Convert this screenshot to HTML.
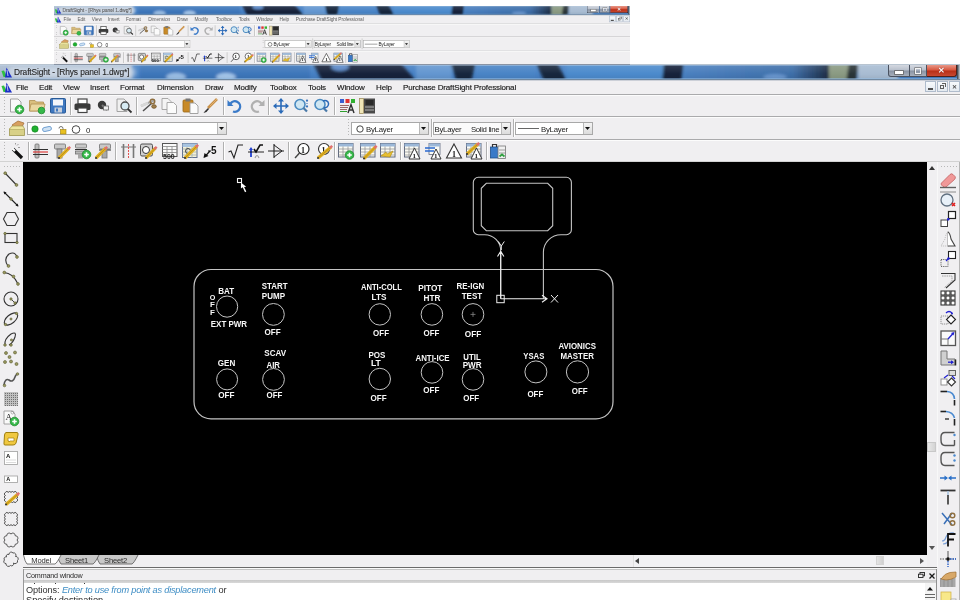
<!DOCTYPE html>
<html><head><meta charset="utf-8"><style>
html,body{margin:0;padding:0;width:960px;height:600px;overflow:hidden;background:#fff;font-family:"Liberation Sans", sans-serif}
</style></head><body>
<div style="position:relative;width:960px;height:600px;overflow:hidden;will-change:transform">
<div style="position:absolute;left:54px;top:6px;width:960px;height:97px;transform:scale(0.6);transform-origin:0 0;overflow:hidden;filter:blur(1.3px)"><svg style="position:absolute;left:0;top:0" width="960" height="15"><defs><filter id="tbs" x="-20%" y="-50%" width="140%" height="200%"><feGaussianBlur stdDeviation="1.6"/></filter><linearGradient id="tbsg" x1="0" x2="1"><stop offset="0" stop-color="#4a80c0"/><stop offset="0.75" stop-color="#3e6ea8"/><stop offset="1" stop-color="#1c2c44"/></linearGradient></defs><rect x="0" y="0" width="960" height="15" fill="#4680c4"/><g filter="url(#tbs)"><rect x="-10" y="-4" width="142" height="22" fill="#aabbd0"/><rect x="140" y="-4" width="170" height="22" fill="#3e76ba"/><ellipse cx="176" cy="12" rx="10" ry="4" fill="#9cc0e6"/><ellipse cx="226" cy="12" rx="10" ry="4" fill="#a6c8ec"/><path d="M312 -4H399L418 18H323Z" fill="#17233a"/><ellipse cx="340" cy="2" rx="9" ry="4" fill="#5a88c8"/><rect x="416" y="-4" width="36" height="22" fill="#6496d0"/><path d="M450 -4H476L471 18H457Z" fill="#18263c"/><rect x="476" y="-4" width="60" height="22" fill="#4a84c6"/><path d="M535 -4H556L568 18H545Z" fill="#18263c"/><rect x="566" y="-4" width="98" height="22" fill="#4c8acc"/><path d="M664 -4H684L681 18H662Z" fill="#16243a"/><rect x="684" y="-4" width="145" height="22" fill="url(#tbsg)"/><ellipse cx="775" cy="12" rx="12" ry="3" fill="#6a98d0"/><rect x="829" y="-4" width="21" height="22" fill="#8a9a82"/><path d="M849 -4H859L856 18H846Z" fill="#2a3438"/><rect x="858" y="-4" width="40" height="22" fill="#a8bcd2"/></g></svg>
<div style="position:absolute;left:0px;top:0px;width:960px;height:15px;background:linear-gradient(rgba(255,255,255,0.12),rgba(0,0,0,0) 60%,rgba(0,0,0,0.08))"></div>
<div style="position:absolute;left:0px;top:0px;width:960px;height:1px;background:rgba(190,210,230,0.45)"></div>
<div style="position:absolute;left:0px;top:13px;width:960px;height:1px;background:rgba(150,190,230,0.55)"></div>
<div style="position:absolute;left:0px;top:14px;width:960px;height:1px;background:#7088a0"></div>
<div style="position:absolute;left:8px;top:2px;width:128px;height:11px;background:rgba(225,232,240,0.6);border-radius:6px;filter:blur(2px)"></div>
<svg style="position:absolute;left:1px;top:2px;overflow:visible" width="12" height="11" viewBox="0 0 12 11" ><path d="M0.5 4L3 3.5L6 10H2.5Z" fill="#30c040"/><path d="M5.5 0.5L11 10.5H4Z" fill="#1a2ec8"/><path d="M6 3L7 9" stroke="#fff" stroke-width="0.7"/></svg>
<div style="position:absolute;left:14px;top:3px;font-size:8.4px;line-height:1;color:#707070;white-space:nowrap;letter-spacing:-0.12px;-webkit-text-stroke:0.12px #333">DraftSight - [Rhys panel 1.dwg*]</div>
<div style="position:absolute;left:957px;top:0px;width:3px;height:14px;background:linear-gradient(90deg,#303840,#c8d0d8)"></div>
<div style="position:absolute;left:888px;top:0px;width:22px;height:12px;background:linear-gradient(#d4d8e0,#b8c0cc 45%,#8a94a4 55%,#a8b0bc);border:1px solid #4a5260;border-top:none;border-radius:0 0 0 3px;box-sizing:border-box"></div>
<div style="position:absolute;left:895px;top:6px;width:8px;height:2.5px;background:#fff;box-shadow:0 0 0 0.8px #666"></div>
<div style="position:absolute;left:910px;top:0px;width:17px;height:12px;background:linear-gradient(#d4d8e0,#b8c0cc 45%,#8a94a4 55%,#a8b0bc);border:1px solid #4a5260;border-left:none;border-top:none;box-sizing:border-box"></div>
<div style="position:absolute;left:915px;top:3px;width:6px;height:5.5px;border:1.5px solid #f4f4f4;box-sizing:border-box;box-shadow:0 0 0 0.6px #666"></div>
<div style="position:absolute;left:927px;top:0px;width:30px;height:12px;background:linear-gradient(#e89888,#d85840 45%,#b83018 55%,#c84830);border:1px solid #502018;border-left:none;border-top:none;border-radius:0 0 3px 0;box-sizing:border-box"></div>
<div style="position:absolute;left:938px;top:2px;font-size:8px;line-height:1;color:#fff;white-space:nowrap;font-weight:bold;text-shadow:0 0 1px #600">&#x2715;</div>
<div style="position:absolute;left:0px;top:15px;width:960px;height:15px;background:#f0eff1"></div>
<div style="position:absolute;left:0px;top:15px;width:960px;height:1px;background:#ccd0d8"></div>
<svg style="position:absolute;left:1px;top:17px;overflow:visible" width="12" height="11" viewBox="0 0 12 11" ><path d="M0.5 4L3 3.5L6 10H2.5Z" fill="#30c040"/><path d="M5.5 0.5L11 10.5H4Z" fill="#1a2ec8"/><path d="M6 3L7 9" stroke="#fff" stroke-width="0.7"/></svg>
<div style="position:absolute;left:16px;top:18.8px;font-size:8px;line-height:1;color:#606060;white-space:nowrap;letter-spacing:-0.15px;-webkit-text-stroke:0px #000">File</div>
<div style="position:absolute;left:39px;top:18.8px;font-size:8px;line-height:1;color:#606060;white-space:nowrap;letter-spacing:-0.15px;-webkit-text-stroke:0px #000">Edit</div>
<div style="position:absolute;left:63px;top:18.8px;font-size:8px;line-height:1;color:#606060;white-space:nowrap;letter-spacing:-0.15px;-webkit-text-stroke:0px #000">View</div>
<div style="position:absolute;left:90px;top:18.8px;font-size:8px;line-height:1;color:#606060;white-space:nowrap;letter-spacing:-0.15px;-webkit-text-stroke:0px #000">Insert</div>
<div style="position:absolute;left:120px;top:18.8px;font-size:8px;line-height:1;color:#606060;white-space:nowrap;letter-spacing:-0.15px;-webkit-text-stroke:0px #000">Format</div>
<div style="position:absolute;left:157px;top:18.8px;font-size:8px;line-height:1;color:#606060;white-space:nowrap;letter-spacing:-0.15px;-webkit-text-stroke:0px #000">Dimension</div>
<div style="position:absolute;left:205px;top:18.8px;font-size:8px;line-height:1;color:#606060;white-space:nowrap;letter-spacing:-0.15px;-webkit-text-stroke:0px #000">Draw</div>
<div style="position:absolute;left:234px;top:18.8px;font-size:8px;line-height:1;color:#606060;white-space:nowrap;letter-spacing:-0.15px;-webkit-text-stroke:0px #000">Modify</div>
<div style="position:absolute;left:270px;top:18.8px;font-size:8px;line-height:1;color:#606060;white-space:nowrap;letter-spacing:-0.15px;-webkit-text-stroke:0px #000">Toolbox</div>
<div style="position:absolute;left:308px;top:18.8px;font-size:8px;line-height:1;color:#606060;white-space:nowrap;letter-spacing:-0.15px;-webkit-text-stroke:0px #000">Tools</div>
<div style="position:absolute;left:337px;top:18.8px;font-size:8px;line-height:1;color:#606060;white-space:nowrap;letter-spacing:-0.15px;-webkit-text-stroke:0px #000">Window</div>
<div style="position:absolute;left:376px;top:18.8px;font-size:8px;line-height:1;color:#606060;white-space:nowrap;letter-spacing:-0.15px;-webkit-text-stroke:0px #000">Help</div>
<div style="position:absolute;left:403px;top:18.8px;font-size:8px;line-height:1;color:#606060;white-space:nowrap;letter-spacing:-0.15px;-webkit-text-stroke:0px #000">Purchase DraftSight Professional</div>
<div style="position:absolute;left:925px;top:16px;width:11px;height:11px;background:linear-gradient(#f8fafc,#e4eaf0);border:1px solid #b0bccc;box-sizing:border-box"></div>
<div style="position:absolute;left:937px;top:16px;width:11px;height:11px;background:linear-gradient(#f8fafc,#e4eaf0);border:1px solid #b0bccc;box-sizing:border-box"></div>
<div style="position:absolute;left:949px;top:16px;width:11px;height:11px;background:linear-gradient(#f8fafc,#e4eaf0);border:1px solid #b0bccc;box-sizing:border-box"></div>
<div style="position:absolute;left:928px;top:23px;width:5px;height:1.5px;background:#505050"></div>
<div style="position:absolute;left:940px;top:19.5px;width:4px;height:4px;border:1px solid #606060;box-sizing:border-box"></div>
<div style="position:absolute;left:941.5px;top:18px;width:4px;height:4px;border-top:1px solid #606060;border-right:1px solid #606060;box-sizing:border-box"></div>
<div style="position:absolute;left:951.5px;top:18.5px;font-size:6px;line-height:1;color:#505050;white-space:nowrap;font-weight:bold">&#x2715;</div>
<div style="position:absolute;left:959px;top:31px;width:1px;height:20px;background:#a0a0a0"></div>
<div style="position:absolute;left:0px;top:30px;width:960px;height:67px;background:#f0eff1"></div>
<div style="position:absolute;left:0px;top:29px;width:960px;height:1px;background:#d4d4d6"></div>
<div style="position:absolute;left:0px;top:30px;width:960px;height:1px;background:#fcfcfc"></div>
<div style="position:absolute;left:0px;top:51px;width:960px;height:1px;background:#b0b0b2"></div>
<div style="position:absolute;left:0px;top:52px;width:960px;height:1px;background:#fcfcfc"></div>
<div style="position:absolute;left:0px;top:74px;width:960px;height:1px;background:#d8d8da"></div>
<div style="position:absolute;left:0px;top:75px;width:960px;height:1px;background:#fcfcfc"></div>
<div style="position:absolute;left:4px;top:32px;width:1px;height:18px;background:repeating-linear-gradient(#b8b8b8 0 1px,transparent 1px 3px)"></div>
<svg style="position:absolute;left:9px;top:33px;overflow:visible" width="16" height="16" viewBox="0 0 16 16" ><path d="M1.5 1H9.0L12.0 4V14H1.5Z" fill="#fafafa" stroke="#9a9a9a" stroke-width="0.9"/><circle cx="10.5" cy="11.5" r="4.3" fill="#36b84a" stroke="#1f8a2c" stroke-width="0.8"/><path d="M8.2 11.5H12.8M10.5 9.2V13.8" stroke="#fff" stroke-width="1.6"/></svg>
<svg style="position:absolute;left:29px;top:33px;overflow:visible" width="16" height="16" viewBox="0 0 16 16" ><path d="M0.5 2.5H6L7.5 4H14.5V13H0.5Z" fill="#d9bf7e" stroke="#b09050" stroke-width="0.8"/><path d="M2 6H16L14.5 13H0.5Z" fill="#ead7a0" stroke="#b09050" stroke-width="0.8"/><circle cx="12.5" cy="12.5" r="3.3" fill="#36b84a" stroke="#1f8a2c" stroke-width="0.8"/><path d="M10.2 12.5H14.8M12.5 10.2V14.8" stroke="#36b84a" stroke-width="1.6"/></svg>
<svg style="position:absolute;left:50px;top:33px;overflow:visible" width="16" height="16" viewBox="0 0 16 16" ><rect x="0.5" y="0.5" width="15" height="14.5" rx="1" fill="#3f78c0" stroke="#285a98"/><rect x="3" y="1.5" width="10" height="6" fill="#f4f6fa"/><rect x="4.5" y="9.5" width="7.5" height="5" fill="#c8d0dc"/><rect x="6" y="10.5" width="2" height="3" fill="#3f78c0"/></svg>
<svg style="position:absolute;left:74px;top:33px;overflow:visible" width="16" height="16" viewBox="0 0 16 16" ><rect x="4" y="1" width="9" height="5" fill="#fff" stroke="#444" stroke-width="1.2"/><rect x="0.5" y="5.5" width="16" height="6.5" rx="1.5" fill="#3a3a3a"/><rect x="4" y="10" width="9" height="4.5" fill="#fff" stroke="#444" stroke-width="1.2"/></svg>
<svg style="position:absolute;left:97px;top:33px;overflow:visible" width="16" height="16" viewBox="0 0 16 16" ><circle cx="5" cy="7" r="4.2" fill="#3a3a3a"/><path d="M5 7L10 12" stroke="#777" stroke-width="2"/><rect x="6.5" y="8" width="5" height="4" fill="#eee" stroke="#666" stroke-width="0.8"/></svg>
<svg style="position:absolute;left:116px;top:33px;overflow:visible" width="16" height="16" viewBox="0 0 16 16" ><path d="M1 1H8L11 4V13.5H1Z" fill="#f0f0f0" stroke="#9a9a9a" stroke-width="0.9"/><circle cx="9" cy="8" r="4" fill="#d8ecf4" stroke="#505050" stroke-width="1.3"/><path d="M11.8 10.8L15.5 14.5" stroke="#303030" stroke-width="1.8"/></svg>
<svg style="position:absolute;left:140px;top:33px;overflow:visible" width="16" height="16" viewBox="0 0 16 16" ><path d="M1 8L15 2" stroke="#a8a8a8" stroke-width="2"/><path d="M1 8L8 5" stroke="#d8d8d8" stroke-width="2.5"/><path d="M3 13L12 5" stroke="#505050" stroke-width="1.5"/><circle cx="12.5" cy="3.5" r="2.2" fill="none" stroke="#907040" stroke-width="1.5"/><ellipse cx="14" cy="8.5" rx="2.3" ry="1.8" fill="#a08050" stroke="#705020" stroke-width="0.8"/></svg>
<svg style="position:absolute;left:161px;top:33px;overflow:visible" width="16" height="16" viewBox="0 0 16 16" ><path d="M1 0.5H7L10 3.5V11.5H1Z" fill="#f4f4f4" stroke="#a0a0a0" stroke-width="0.9"/><path d="M6 4.5H12.5L15.5 7.5V15.5H6Z" fill="#fbfbfb" stroke="#a0a0a0" stroke-width="0.9"/></svg>
<svg style="position:absolute;left:182px;top:33px;overflow:visible" width="16" height="16" viewBox="0 0 16 16" ><rect x="1" y="2" width="10" height="12" rx="1" fill="#c88a28" stroke="#9a6818" stroke-width="0.8"/><rect x="3.5" y="0.5" width="5" height="3" fill="#777"/><path d="M8 5H13L16 8V15.5H8Z" fill="#fbfbfb" stroke="#9a9a9a" stroke-width="0.9"/></svg>
<svg style="position:absolute;left:202px;top:33px;overflow:visible" width="16" height="16" viewBox="0 0 16 16" ><path d="M15 1L6 10" stroke="#c89048" stroke-width="2.6"/><path d="M15 1L8 8" stroke="#e0b070" stroke-width="1"/><path d="M6 10L3 13L1.5 15L4.5 14L7 11Z" fill="#303030"/></svg>
<svg style="position:absolute;left:227px;top:33px;overflow:visible" width="16" height="16" viewBox="0 0 16 16" ><path d="M3.5 5.5A5.3 5.3 0 1 1 6 13.5" fill="none" stroke="#3a7ac8" stroke-width="2.3"/><path d="M0.5 2V8H6.5Z" fill="#3a7ac8"/></svg>
<svg style="position:absolute;left:249px;top:33px;overflow:visible" width="16" height="16" viewBox="0 0 16 16" ><path d="M12.5 5.5A5.3 5.3 0 1 0 10 13.5" fill="none" stroke="#b0b0b0" stroke-width="2.3"/><path d="M15.5 2V8H9.5Z" fill="#b0b0b0"/></svg>
<svg style="position:absolute;left:273px;top:33px;overflow:visible" width="16" height="16" viewBox="0 0 16 16" ><path d="M8 1V15M1 8H15" stroke="#2a6ab8" stroke-width="1.6"/><path d="M8 0L5 3.5H11Z M8 16L5 12.5H11Z M0 8L3.5 5V11Z M16 8L12.5 5V11Z" fill="#2a6ab8"/></svg>
<svg style="position:absolute;left:293px;top:33px;overflow:visible" width="16" height="16" viewBox="0 0 16 16" ><circle cx="7" cy="6.5" r="5" fill="#cfe6f2" stroke="#4a8ac0" stroke-width="1.6"/><path d="M10.5 10L14 13.5" stroke="#4a7aa8" stroke-width="2.2"/><path d="M14 1L12.7 3H15.3Z M14 10L12.7 8H15.3Z" fill="#2a6ab8"/><path d="M14 3V8" stroke="#2a6ab8" stroke-width="1" stroke-dasharray="1 1"/></svg>
<svg style="position:absolute;left:313px;top:33px;overflow:visible" width="16" height="16" viewBox="0 0 16 16" ><circle cx="7" cy="6.5" r="5" fill="#cfe6f2" stroke="#4a8ac0" stroke-width="1.6"/><path d="M10.5 10L14 13.5" stroke="#4a7aa8" stroke-width="2.2"/><path d="M10 3A3.6 3.6 0 1 1 11 9.5" fill="none" stroke="#2a6ab8" stroke-width="1.5"/></svg>
<svg style="position:absolute;left:339px;top:33px;overflow:visible" width="16" height="16" viewBox="0 0 16 16" ><rect x="1" y="1" width="4" height="4" fill="#3a60d0"/><rect x="6.5" y="1" width="4" height="4" fill="#e03030"/><rect x="12" y="1" width="4" height="4" fill="#30b030"/><path d="M1 7.5H10M1 9.5H9M1 11.5H8" stroke="#9a6a6a" stroke-width="1"/><path d="M1 13.5H8" stroke="#30a030" stroke-width="1"/><path d="M9 15L12 6.5L15 15M10 12H14" fill="none" stroke="#303030" stroke-width="1.4"/></svg>
<svg style="position:absolute;left:359px;top:33px;overflow:visible" width="16" height="16" viewBox="0 0 16 16" ><rect x="0.5" y="0.5" width="4" height="15" fill="#f0e6b8" stroke="#a09060" stroke-width="0.8"/><rect x="5" y="0.5" width="11" height="15" fill="#4a4a4a"/><rect x="6.5" y="2" width="8" height="5" fill="#2a2a2a"/><path d="M6 9H15M6 12H15" stroke="#ccc" stroke-width="0.8"/></svg>
<div style="position:absolute;left:70px;top:32px;width:1px;height:18px;background:#b0b0b0;box-shadow:1px 0 0 #fff"></div>
<div style="position:absolute;left:136px;top:32px;width:1px;height:18px;background:#b0b0b0;box-shadow:1px 0 0 #fff"></div>
<div style="position:absolute;left:223px;top:32px;width:1px;height:18px;background:#b0b0b0;box-shadow:1px 0 0 #fff"></div>
<div style="position:absolute;left:268px;top:32px;width:1px;height:18px;background:#b0b0b0;box-shadow:1px 0 0 #fff"></div>
<div style="position:absolute;left:334px;top:32px;width:1px;height:18px;background:#b0b0b0;box-shadow:1px 0 0 #fff"></div>
<div style="position:absolute;left:4px;top:54px;width:1px;height:18px;background:repeating-linear-gradient(#b8b8b8 0 1px,transparent 1px 3px)"></div>
<svg style="position:absolute;left:9px;top:55px;overflow:visible" width="16" height="16" viewBox="0 0 16 16" ><path d="M3 5L9 1L15 3L13 7L6 9Z" fill="#d8a060" stroke="#a06a30" stroke-width="0.7"/><rect x="0.5" y="9" width="15" height="6.5" fill="#d8d088" stroke="#a09850" stroke-width="0.8"/><path d="M0.5 9L3 6H14L15.5 9" fill="#eee6a0" stroke="#a09850" stroke-width="0.7"/></svg>
<div style="position:absolute;left:27px;top:57px;width:200px;height:13px;background:#fff;border:1px solid #a8a8a8;box-sizing:border-box"></div>
<div style="position:absolute;left:217px;top:58px;width:9px;height:11px;background:linear-gradient(#f4f4f4,#dcdcdc);border-left:1px solid #b8b8b8;box-sizing:border-box"></div>
<svg style="position:absolute;left:219px;top:62.0px;overflow:visible" width="6" height="4" viewBox="0 0 6 4" ><path d="M0 0H5L2.5 3Z" fill="#111"/></svg>
<svg style="position:absolute;left:30px;top:60px;overflow:visible" width="60" height="10" viewBox="0 0 60 10" ><circle cx="5" cy="4" r="3.2" fill="#20b030" stroke="#108020" stroke-width="0.6"/><rect x="12.5" y="2" width="9" height="4" rx="2" fill="#cfe2f4" stroke="#5a90c8" stroke-width="0.8" transform="rotate(-12 17 4)"/><path d="M29 3.5A2 2 0 0 1 33 3.5V5" fill="none" stroke="#666" stroke-width="0.9"/><rect x="30.5" y="4.5" width="5.5" height="4.5" fill="#e8c020" stroke="#a08010" stroke-width="0.6"/><circle cx="46" cy="4.5" r="3.8" fill="#fff" stroke="#333" stroke-width="0.9"/></svg><div style="position:absolute;left:86px;top:61.5px;font-size:7.8px;line-height:1;color:#222;white-space:nowrap;">0</div>
<div style="position:absolute;left:348px;top:54px;width:1px;height:18px;background:repeating-linear-gradient(#b8b8b8 0 1px,transparent 1px 3px)"></div>
<div style="position:absolute;left:351px;top:57px;width:78px;height:13px;background:#fff;border:1px solid #a8a8a8;box-sizing:border-box"></div>
<div style="position:absolute;left:419px;top:58px;width:9px;height:11px;background:linear-gradient(#f4f4f4,#dcdcdc);border-left:1px solid #b8b8b8;box-sizing:border-box"></div>
<svg style="position:absolute;left:421px;top:62.0px;overflow:visible" width="6" height="4" viewBox="0 0 6 4" ><path d="M0 0H5L2.5 3Z" fill="#111"/></svg>
<svg style="position:absolute;left:355.5px;top:59.5px;overflow:visible" width="9" height="9" viewBox="0 0 9 9" ><circle cx="4" cy="4" r="3.2" fill="none" stroke="#333" stroke-width="0.9"/></svg><div style="position:absolute;left:366px;top:61px;font-size:7.8px;line-height:1;color:#222;white-space:nowrap;letter-spacing:-0.25px">ByLayer</div>
<div style="position:absolute;left:431px;top:54px;width:1px;height:18px;background:#b0b0b0;box-shadow:1px 0 0 #fff"></div>
<div style="position:absolute;left:433px;top:57px;width:78px;height:13px;background:#fbfbfb;border:1px solid #a8a8a8;box-sizing:border-box"></div>
<div style="position:absolute;left:501px;top:58px;width:9px;height:11px;background:linear-gradient(#f4f4f4,#dcdcdc);border-left:1px solid #b8b8b8;box-sizing:border-box"></div>
<svg style="position:absolute;left:503px;top:62.0px;overflow:visible" width="6" height="4" viewBox="0 0 6 4" ><path d="M0 0H5L2.5 3Z" fill="#111"/></svg>
<div style="position:absolute;left:434.5px;top:61px;font-size:7.8px;line-height:1;color:#222;white-space:nowrap;letter-spacing:-0.25px">ByLayer</div><div style="position:absolute;left:471px;top:61px;font-size:7.8px;line-height:1;color:#222;white-space:nowrap;letter-spacing:-0.35px">Solid line</div>
<div style="position:absolute;left:513px;top:54px;width:1px;height:18px;background:#b0b0b0;box-shadow:1px 0 0 #fff"></div>
<div style="position:absolute;left:515px;top:57px;width:78px;height:13px;background:#fff;border:1px solid #a8a8a8;box-sizing:border-box"></div>
<div style="position:absolute;left:583px;top:58px;width:9px;height:11px;background:linear-gradient(#f4f4f4,#dcdcdc);border-left:1px solid #b8b8b8;box-sizing:border-box"></div>
<svg style="position:absolute;left:585px;top:62.0px;overflow:visible" width="6" height="4" viewBox="0 0 6 4" ><path d="M0 0H5L2.5 3Z" fill="#111"/></svg>
<div style="position:absolute;left:518px;top:63px;width:21px;height:1px;background:#666"></div><div style="position:absolute;left:541px;top:61px;font-size:7.8px;line-height:1;color:#222;white-space:nowrap;letter-spacing:-0.25px">ByLayer</div>
<div style="position:absolute;left:4px;top:77px;width:1px;height:18px;background:repeating-linear-gradient(#b8b8b8 0 1px,transparent 1px 3px)"></div>
<svg style="position:absolute;left:9px;top:78px;overflow:visible" width="16" height="16" viewBox="0 0 16 16" ><path d="M4 6L13 15" stroke="#111" stroke-width="3.2"/><path d="M3.5 5.5L6 8" stroke="#fff" stroke-width="2.2"/><path d="M8 2.5L9.5 1M9 4.5H11M6.5 1.5V0" stroke="#888" stroke-width="0.8"/></svg>
<svg style="position:absolute;left:33px;top:78px;overflow:visible" width="16" height="16" viewBox="0 0 16 16" ><rect x="2" y="1" width="4" height="14" rx="1" fill="#bdbdbd" stroke="#707070" stroke-width="0.8"/><path d="M0 6.5H15M0 11.5H15" stroke="#303030" stroke-width="1.1"/><path d="M0 9H15" stroke="#e04040" stroke-width="1.2"/></svg>
<svg style="position:absolute;left:54px;top:78px;overflow:visible" width="16" height="16" viewBox="0 0 16 16" ><rect x="0.5" y="1" width="11" height="5" rx="1" fill="#c8c8c8" stroke="#707070" stroke-width="0.8"/><rect x="3" y="6" width="5" height="9" fill="#a8a8a8" stroke="#707070" stroke-width="0.8"/><path d="M5 15L15 5" stroke="#e0b020" stroke-width="3.2"/><path d="M5 15L15 5" stroke="#806010" stroke-width="0.6" opacity="0.6"/><circle cx="5" cy="15" r="1" fill="#303030"/><path d="M13.8 6.2L16.2 3.8" stroke="#e07070" stroke-width="2.4"/></svg>
<svg style="position:absolute;left:75px;top:78px;overflow:visible" width="16" height="16" viewBox="0 0 16 16" ><rect x="0.5" y="1" width="11" height="4" rx="1" fill="#c8c8c8" stroke="#707070" stroke-width="0.8"/><path d="M0 6.5H12" stroke="#303030"/><rect x="0.5" y="8" width="11" height="3" fill="#b8b8b8" stroke="#707070" stroke-width="0.8"/><rect x="3" y="11" width="5" height="4.5" fill="#a8a8a8"/><circle cx="11.5" cy="11.5" r="4.3" fill="#36b84a" stroke="#1f8a2c" stroke-width="0.8"/><path d="M9.2 11.5H13.8M11.5 9.2V13.8" stroke="#fff" stroke-width="1.6"/></svg>
<svg style="position:absolute;left:95px;top:78px;overflow:visible" width="16" height="16" viewBox="0 0 16 16" ><rect x="4.5" y="1" width="11" height="5" rx="1" fill="#c8c8c8" stroke="#707070" stroke-width="0.8"/><path d="M4 7H16" stroke="#303030"/><rect x="7" y="8" width="5" height="7" fill="#a8a8a8" stroke="#707070" stroke-width="0.8"/><path d="M1 15L11 5" stroke="#e0b020" stroke-width="3.2"/><path d="M1 15L11 5" stroke="#806010" stroke-width="0.6" opacity="0.6"/><circle cx="1" cy="15" r="1" fill="#303030"/><path d="M9.8 6.2L12.2 3.8" stroke="#e07070" stroke-width="2.4"/></svg>
<svg style="position:absolute;left:121px;top:78px;overflow:visible" width="16" height="16" viewBox="0 0 16 16" ><path d="M2.5 1V15M12.5 1V15" stroke="#777" stroke-width="1.6"/><path d="M0 4H15" stroke="#777" stroke-width="1"/><path d="M7.5 1V15" stroke="#e05050" stroke-width="1" stroke-dasharray="2 1"/></svg>
<svg style="position:absolute;left:140px;top:78px;overflow:visible" width="16" height="16" viewBox="0 0 16 16" ><rect x="0.5" y="1" width="12" height="12" rx="1.5" fill="#d0d0d0" stroke="#505050" stroke-width="1"/><circle cx="6" cy="7" r="3.5" fill="#fff" stroke="#333" stroke-width="1"/><path d="M6 15L15.5 5" stroke="#e0b020" stroke-width="3.2"/><path d="M6 15L15.5 5" stroke="#806010" stroke-width="0.6" opacity="0.6"/><circle cx="6" cy="15" r="1" fill="#303030"/><path d="M14.3 6.2L16.7 3.8" stroke="#e07070" stroke-width="2.4"/></svg>
<svg style="position:absolute;left:162px;top:78px;overflow:visible" width="16" height="16" viewBox="0 0 16 16" ><rect x="0.5" y="0.5" width="14.5" height="13" fill="#fafafa" stroke="#555" stroke-width="1"/><path d="M0.5 3.5H15M0.5 6.5H15M0.5 9.5H15M5 3.5V14M10 3.5V14" stroke="#888" stroke-width="0.8"/><text x="1" y="15.5" font-size="7" font-family="Liberation Sans" font-weight="bold" fill="#222">500</text></svg>
<svg style="position:absolute;left:182px;top:78px;overflow:visible" width="16" height="16" viewBox="0 0 16 16" ><rect x="0.5" y="0.5" width="14.5" height="14" fill="#f4f0d8" stroke="#607090" stroke-width="1"/><rect x="0.5" y="0.5" width="14.5" height="3.5" fill="#a8c4e0"/><path d="M0.5 6H15M0.5 9H15M0.5 12H15M5 4V15M10 4V15" stroke="#9aa" stroke-width="0.7"/><circle cx="6" cy="8" r="2.5" fill="none" stroke="#444"/><path d="M3 15L15 3" stroke="#e0b020" stroke-width="3.2"/><path d="M3 15L15 3" stroke="#806010" stroke-width="0.6" opacity="0.6"/><circle cx="3" cy="15" r="1" fill="#303030"/><path d="M13.8 4.2L16.2 1.8" stroke="#e07070" stroke-width="2.4"/></svg>
<svg style="position:absolute;left:203px;top:78px;overflow:visible" width="16" height="16" viewBox="0 0 16 16" ><path d="M1.5 14L7 8" stroke="#111" stroke-width="1.2"/><path d="M0.5 15L1.5 10L5.5 13Z" fill="#111"/><text x="8" y="11" font-size="10" font-family="Liberation Sans" font-weight="bold" fill="#111">5</text><path d="M5 8H8" stroke="#111"/></svg>
<svg style="position:absolute;left:228px;top:78px;overflow:visible" width="16" height="16" viewBox="0 0 16 16" ><path d="M0.5 9L3 8L6 15L10 2H15" fill="none" stroke="#222" stroke-width="1.1"/></svg>
<svg style="position:absolute;left:248px;top:78px;overflow:visible" width="16" height="16" viewBox="0 0 16 16" ><path d="M3 14V6" stroke="#2040d0" stroke-width="1.8"/><path d="M3 4L1 7H5Z" fill="#2040d0"/><path d="M6 6L8 9L12 2H15" fill="none" stroke="#111" stroke-width="1.6"/><path d="M0 9H16" stroke="#111" stroke-width="0.9"/><path d="M7 15Q9 10 11 15" fill="none" stroke="#999" stroke-width="1.1"/></svg>
<svg style="position:absolute;left:268px;top:78px;overflow:visible" width="16" height="16" viewBox="0 0 16 16" ><path d="M0 8H16M6 1V15" stroke="#222" stroke-width="1.1"/><path d="M6 2L14 8L6 14" fill="none" stroke="#222" stroke-width="1"/></svg>
<svg style="position:absolute;left:294px;top:78px;overflow:visible" width="16" height="16" viewBox="0 0 16 16" ><circle cx="9.5" cy="6" r="5.5" fill="#fff" stroke="#222" stroke-width="1.2"/><text x="7" y="9.5" font-size="8" font-family="Liberation Serif" font-weight="bold" fill="#111">1</text><path d="M5.5 10L1 15" stroke="#444" stroke-width="1.4"/></svg>
<svg style="position:absolute;left:316px;top:78px;overflow:visible" width="16" height="16" viewBox="0 0 16 16" ><circle cx="8" cy="6" r="5.5" fill="#fff" stroke="#333" stroke-width="1.1"/><text x="5.5" y="9.5" font-size="8" font-family="Liberation Serif" font-weight="bold" fill="#111">1</text><path d="M2 15L15 4" stroke="#e0b020" stroke-width="3.2"/><path d="M2 15L15 4" stroke="#806010" stroke-width="0.6" opacity="0.6"/><circle cx="2" cy="15" r="1" fill="#303030"/><path d="M13.8 5.2L16.2 2.8" stroke="#e07070" stroke-width="2.4"/></svg>
<svg style="position:absolute;left:338px;top:78px;overflow:visible" width="16" height="16" viewBox="0 0 16 16" ><rect x="0.5" y="0.5" width="14.5" height="13.5" fill="#fbfbf4" stroke="#606a80" stroke-width="1"/><rect x="0.5" y="0.5" width="14.5" height="3" fill="#9cb8d8"/><path d="M0.5 6H15M0.5 9H15M0.5 12H15M5 3.5V14M10 3.5V14" stroke="#8a8a8a" stroke-width="0.7"/><circle cx="11.5" cy="12" r="4.3" fill="#36b84a" stroke="#1f8a2c" stroke-width="0.8"/><path d="M9.2 12H13.8M11.5 9.7V14.3" stroke="#fff" stroke-width="1.6"/></svg>
<svg style="position:absolute;left:360px;top:78px;overflow:visible" width="16" height="16" viewBox="0 0 16 16" ><rect x="0.5" y="0.5" width="14.5" height="13.5" fill="#fbfbf4" stroke="#606a80" stroke-width="1"/><rect x="0.5" y="0.5" width="14.5" height="3" fill="#9cb8d8"/><path d="M0.5 6H15M0.5 9H15M0.5 12H15M5 3.5V14M10 3.5V14" stroke="#8a8a8a" stroke-width="0.7"/><path d="M4 15.5L15.5 4" stroke="#e0b020" stroke-width="3.2"/><path d="M4 15.5L15.5 4" stroke="#806010" stroke-width="0.6" opacity="0.6"/><circle cx="4" cy="15.5" r="1" fill="#303030"/><path d="M14.3 5.2L16.7 2.8" stroke="#e07070" stroke-width="2.4"/></svg>
<svg style="position:absolute;left:380px;top:78px;overflow:visible" width="16" height="16" viewBox="0 0 16 16" ><rect x="0.5" y="0.5" width="14.5" height="13.5" fill="#fbfbf4" stroke="#606a80" stroke-width="1"/><rect x="0.5" y="0.5" width="14.5" height="3" fill="#9cb8d8"/><path d="M0.5 6H15M0.5 9H15M0.5 12H15M5 3.5V14M10 3.5V14" stroke="#8a8a8a" stroke-width="0.7"/><path d="M1 13L6 9L7 11L13 8L10 14Z" fill="#e8c030" stroke="#b08a10" stroke-width="0.6"/></svg>
<svg style="position:absolute;left:404px;top:78px;overflow:visible" width="16" height="16" viewBox="0 0 16 16" ><rect x="0.5" y="0.5" width="14.5" height="13.5" fill="#fbfbf4" stroke="#606a80" stroke-width="1"/><rect x="0.5" y="0.5" width="14.5" height="3" fill="#9cb8d8"/><path d="M0.5 6H15M0.5 9H15M0.5 12H15M5 3.5V14M10 3.5V14" stroke="#8a8a8a" stroke-width="0.7"/><path d="M10.5 5L16 16H5Z" fill="#fff" stroke="#333" stroke-width="1"/><text x="8.5" y="14.5" font-size="7" font-family="Liberation Serif" font-weight="bold" fill="#111">1</text></svg>
<svg style="position:absolute;left:425px;top:78px;overflow:visible" width="16" height="16" viewBox="0 0 16 16" ><rect x="4" y="0.5" width="11" height="11" fill="#fbfbf4" stroke="#606a80" stroke-width="0.8"/><rect x="4" y="0.5" width="11" height="3" fill="#9cb8d8"/><path d="M0 5H10M0 8H9" stroke="#2a6ad0" stroke-width="1.6"/><path d="M11.0 6L16 16H6Z" fill="#fff" stroke="#333" stroke-width="1"/><text x="9.0" y="14.5" font-size="7" font-family="Liberation Serif" font-weight="bold" fill="#111">1</text></svg>
<svg style="position:absolute;left:446px;top:78px;overflow:visible" width="16" height="16" viewBox="0 0 16 16" ><path d="M8 1L15.5 15H0.5Z" fill="#fff" stroke="#333" stroke-width="1.1"/><text x="6" y="13.5" font-size="8" font-family="Liberation Serif" font-weight="bold" fill="#111">1</text></svg>
<svg style="position:absolute;left:466px;top:78px;overflow:visible" width="16" height="16" viewBox="0 0 16 16" ><rect x="0.5" y="0.5" width="14.5" height="13.5" fill="#fbfbf4" stroke="#606a80" stroke-width="1"/><rect x="0.5" y="0.5" width="14.5" height="3" fill="#9cb8d8"/><path d="M0.5 6H15M0.5 9H15M0.5 12H15M5 3.5V14M10 3.5V14" stroke="#8a8a8a" stroke-width="0.7"/><path d="M1 11L12 1" stroke="#e0b020" stroke-width="3.2"/><path d="M1 11L12 1" stroke="#806010" stroke-width="0.6" opacity="0.6"/><circle cx="1" cy="11" r="1" fill="#303030"/><path d="M10.8 2.2L13.2 -0.19999999999999996" stroke="#e07070" stroke-width="2.4"/><path d="M10.5 5L16 16H5Z" fill="#fff" stroke="#333" stroke-width="1"/><text x="8.5" y="14.5" font-size="7" font-family="Liberation Serif" font-weight="bold" fill="#111">1</text></svg>
<svg style="position:absolute;left:490px;top:78px;overflow:visible" width="16" height="16" viewBox="0 0 16 16" ><rect x="0.5" y="4" width="8" height="11" fill="#3a7ac8" stroke="#20508a" stroke-width="0.8"/><path d="M2.5 4V1.5H6.5V4" fill="none" stroke="#333" stroke-width="1.2"/><rect x="8" y="3" width="7.5" height="12.5" fill="#f0f0f0" stroke="#777" stroke-width="0.8"/><path d="M9 7H15M9 10H15" stroke="#888" stroke-width="0.8"/><path d="M9.5 13.5L12 11.5L14.5 13.5" stroke="#30a040" stroke-width="1.8" fill="none"/></svg>
<div style="position:absolute;left:28px;top:77px;width:1px;height:18px;background:#b0b0b0;box-shadow:1px 0 0 #fff"></div>
<div style="position:absolute;left:115px;top:77px;width:1px;height:18px;background:#b0b0b0;box-shadow:1px 0 0 #fff"></div>
<div style="position:absolute;left:223px;top:77px;width:1px;height:18px;background:#b0b0b0;box-shadow:1px 0 0 #fff"></div>
<div style="position:absolute;left:288px;top:77px;width:1px;height:18px;background:#b0b0b0;box-shadow:1px 0 0 #fff"></div>
<div style="position:absolute;left:334px;top:77px;width:1px;height:18px;background:#b0b0b0;box-shadow:1px 0 0 #fff"></div>
<div style="position:absolute;left:400px;top:77px;width:1px;height:18px;background:#b0b0b0;box-shadow:1px 0 0 #fff"></div>
<div style="position:absolute;left:486px;top:77px;width:1px;height:18px;background:#b0b0b0;box-shadow:1px 0 0 #fff"></div></div>
<div style="position:absolute;left:0;top:65px;width:960px;height:97px;overflow:hidden"><svg style="position:absolute;left:0;top:0" width="960" height="15"><defs><filter id="tb" x="-20%" y="-50%" width="140%" height="200%"><feGaussianBlur stdDeviation="1.6"/></filter><linearGradient id="tbg" x1="0" x2="1"><stop offset="0" stop-color="#4a80c0"/><stop offset="0.75" stop-color="#3e6ea8"/><stop offset="1" stop-color="#1c2c44"/></linearGradient></defs><rect x="0" y="0" width="960" height="15" fill="#4680c4"/><g filter="url(#tb)"><rect x="-10" y="-4" width="142" height="22" fill="#aabbd0"/><rect x="140" y="-4" width="170" height="22" fill="#3e76ba"/><ellipse cx="176" cy="12" rx="10" ry="4" fill="#9cc0e6"/><ellipse cx="226" cy="12" rx="10" ry="4" fill="#a6c8ec"/><path d="M312 -4H399L418 18H323Z" fill="#17233a"/><ellipse cx="340" cy="2" rx="9" ry="4" fill="#5a88c8"/><rect x="416" y="-4" width="36" height="22" fill="#6496d0"/><path d="M450 -4H476L471 18H457Z" fill="#18263c"/><rect x="476" y="-4" width="60" height="22" fill="#4a84c6"/><path d="M535 -4H556L568 18H545Z" fill="#18263c"/><rect x="566" y="-4" width="98" height="22" fill="#4c8acc"/><path d="M664 -4H684L681 18H662Z" fill="#16243a"/><rect x="684" y="-4" width="145" height="22" fill="url(#tbg)"/><ellipse cx="775" cy="12" rx="12" ry="3" fill="#6a98d0"/><rect x="829" y="-4" width="21" height="22" fill="#8a9a82"/><path d="M849 -4H859L856 18H846Z" fill="#2a3438"/><rect x="858" y="-4" width="40" height="22" fill="#a8bcd2"/></g></svg>
<div style="position:absolute;left:0px;top:0px;width:960px;height:15px;background:linear-gradient(rgba(255,255,255,0.12),rgba(0,0,0,0) 60%,rgba(0,0,0,0.08))"></div>
<div style="position:absolute;left:0px;top:0px;width:960px;height:1px;background:rgba(190,210,230,0.45)"></div>
<div style="position:absolute;left:0px;top:13px;width:960px;height:1px;background:rgba(150,190,230,0.55)"></div>
<div style="position:absolute;left:0px;top:14px;width:960px;height:1px;background:#7088a0"></div>
<div style="position:absolute;left:8px;top:2px;width:128px;height:11px;background:rgba(225,232,240,0.6);border-radius:6px;filter:blur(2px)"></div>
<svg style="position:absolute;left:1px;top:2px;overflow:visible" width="12" height="11" viewBox="0 0 12 11" ><path d="M0.5 4L3 3.5L6 10H2.5Z" fill="#30c040"/><path d="M5.5 0.5L11 10.5H4Z" fill="#1a2ec8"/><path d="M6 3L7 9" stroke="#fff" stroke-width="0.7"/></svg>
<div style="position:absolute;left:14px;top:3px;font-size:8.4px;line-height:1;color:#222;white-space:nowrap;letter-spacing:-0.12px;-webkit-text-stroke:0.12px #333">DraftSight - [Rhys panel 1.dwg*]</div>
<div style="position:absolute;left:957px;top:0px;width:3px;height:14px;background:linear-gradient(90deg,#303840,#c8d0d8)"></div>
<div style="position:absolute;left:888px;top:0px;width:22px;height:12px;background:linear-gradient(#d4d8e0,#b8c0cc 45%,#8a94a4 55%,#a8b0bc);border:1px solid #4a5260;border-top:none;border-radius:0 0 0 3px;box-sizing:border-box"></div>
<div style="position:absolute;left:895px;top:6px;width:8px;height:2.5px;background:#fff;box-shadow:0 0 0 0.8px #666"></div>
<div style="position:absolute;left:910px;top:0px;width:17px;height:12px;background:linear-gradient(#d4d8e0,#b8c0cc 45%,#8a94a4 55%,#a8b0bc);border:1px solid #4a5260;border-left:none;border-top:none;box-sizing:border-box"></div>
<div style="position:absolute;left:915px;top:3px;width:6px;height:5.5px;border:1.5px solid #f4f4f4;box-sizing:border-box;box-shadow:0 0 0 0.6px #666"></div>
<div style="position:absolute;left:927px;top:0px;width:30px;height:12px;background:linear-gradient(#e89888,#d85840 45%,#b83018 55%,#c84830);border:1px solid #502018;border-left:none;border-top:none;border-radius:0 0 3px 0;box-sizing:border-box"></div>
<div style="position:absolute;left:938px;top:2px;font-size:8px;line-height:1;color:#fff;white-space:nowrap;font-weight:bold;text-shadow:0 0 1px #600">&#x2715;</div>
<div style="position:absolute;left:0px;top:15px;width:960px;height:15px;background:#f0eff1"></div>
<div style="position:absolute;left:0px;top:15px;width:960px;height:1px;background:#ccd0d8"></div>
<svg style="position:absolute;left:1px;top:17px;overflow:visible" width="12" height="11" viewBox="0 0 12 11" ><path d="M0.5 4L3 3.5L6 10H2.5Z" fill="#30c040"/><path d="M5.5 0.5L11 10.5H4Z" fill="#1a2ec8"/><path d="M6 3L7 9" stroke="#fff" stroke-width="0.7"/></svg>
<div style="position:absolute;left:16px;top:18.8px;font-size:8px;line-height:1;color:#151515;white-space:nowrap;letter-spacing:-0.15px;-webkit-text-stroke:0.15px #222">File</div>
<div style="position:absolute;left:39px;top:18.8px;font-size:8px;line-height:1;color:#151515;white-space:nowrap;letter-spacing:-0.15px;-webkit-text-stroke:0.15px #222">Edit</div>
<div style="position:absolute;left:63px;top:18.8px;font-size:8px;line-height:1;color:#151515;white-space:nowrap;letter-spacing:-0.15px;-webkit-text-stroke:0.15px #222">View</div>
<div style="position:absolute;left:90px;top:18.8px;font-size:8px;line-height:1;color:#151515;white-space:nowrap;letter-spacing:-0.15px;-webkit-text-stroke:0.15px #222">Insert</div>
<div style="position:absolute;left:120px;top:18.8px;font-size:8px;line-height:1;color:#151515;white-space:nowrap;letter-spacing:-0.15px;-webkit-text-stroke:0.15px #222">Format</div>
<div style="position:absolute;left:157px;top:18.8px;font-size:8px;line-height:1;color:#151515;white-space:nowrap;letter-spacing:-0.15px;-webkit-text-stroke:0.15px #222">Dimension</div>
<div style="position:absolute;left:205px;top:18.8px;font-size:8px;line-height:1;color:#151515;white-space:nowrap;letter-spacing:-0.15px;-webkit-text-stroke:0.15px #222">Draw</div>
<div style="position:absolute;left:234px;top:18.8px;font-size:8px;line-height:1;color:#151515;white-space:nowrap;letter-spacing:-0.15px;-webkit-text-stroke:0.15px #222">Modify</div>
<div style="position:absolute;left:270px;top:18.8px;font-size:8px;line-height:1;color:#151515;white-space:nowrap;letter-spacing:-0.15px;-webkit-text-stroke:0.15px #222">Toolbox</div>
<div style="position:absolute;left:308px;top:18.8px;font-size:8px;line-height:1;color:#151515;white-space:nowrap;letter-spacing:-0.15px;-webkit-text-stroke:0.15px #222">Tools</div>
<div style="position:absolute;left:337px;top:18.8px;font-size:8px;line-height:1;color:#151515;white-space:nowrap;letter-spacing:-0.15px;-webkit-text-stroke:0.15px #222">Window</div>
<div style="position:absolute;left:376px;top:18.8px;font-size:8px;line-height:1;color:#151515;white-space:nowrap;letter-spacing:-0.15px;-webkit-text-stroke:0.15px #222">Help</div>
<div style="position:absolute;left:403px;top:18.8px;font-size:8px;line-height:1;color:#151515;white-space:nowrap;letter-spacing:-0.15px;-webkit-text-stroke:0.15px #222">Purchase DraftSight Professional</div>
<div style="position:absolute;left:925px;top:16px;width:11px;height:11px;background:linear-gradient(#f8fafc,#e4eaf0);border:1px solid #b0bccc;box-sizing:border-box"></div>
<div style="position:absolute;left:937px;top:16px;width:11px;height:11px;background:linear-gradient(#f8fafc,#e4eaf0);border:1px solid #b0bccc;box-sizing:border-box"></div>
<div style="position:absolute;left:949px;top:16px;width:11px;height:11px;background:linear-gradient(#f8fafc,#e4eaf0);border:1px solid #b0bccc;box-sizing:border-box"></div>
<div style="position:absolute;left:928px;top:23px;width:5px;height:1.5px;background:#505050"></div>
<div style="position:absolute;left:940px;top:19.5px;width:4px;height:4px;border:1px solid #606060;box-sizing:border-box"></div>
<div style="position:absolute;left:941.5px;top:18px;width:4px;height:4px;border-top:1px solid #606060;border-right:1px solid #606060;box-sizing:border-box"></div>
<div style="position:absolute;left:951.5px;top:18.5px;font-size:6px;line-height:1;color:#505050;white-space:nowrap;font-weight:bold">&#x2715;</div>
<div style="position:absolute;left:959px;top:31px;width:1px;height:20px;background:#a0a0a0"></div>
<div style="position:absolute;left:0px;top:30px;width:960px;height:67px;background:#f0eff1"></div>
<div style="position:absolute;left:0px;top:29px;width:960px;height:1px;background:#aaaaac"></div>
<div style="position:absolute;left:0px;top:30px;width:960px;height:1px;background:#fcfcfc"></div>
<div style="position:absolute;left:0px;top:51px;width:960px;height:1px;background:#aaaaac"></div>
<div style="position:absolute;left:0px;top:52px;width:960px;height:1px;background:#fcfcfc"></div>
<div style="position:absolute;left:0px;top:74px;width:960px;height:1px;background:#aaaaac"></div>
<div style="position:absolute;left:0px;top:75px;width:960px;height:1px;background:#fcfcfc"></div>
<div style="position:absolute;left:4px;top:32px;width:1px;height:18px;background:repeating-linear-gradient(#b8b8b8 0 1px,transparent 1px 3px)"></div>
<svg style="position:absolute;left:9px;top:33px;overflow:visible" width="16" height="16" viewBox="0 0 16 16" ><path d="M1.5 1H9.0L12.0 4V14H1.5Z" fill="#fafafa" stroke="#9a9a9a" stroke-width="0.9"/><circle cx="10.5" cy="11.5" r="4.3" fill="#36b84a" stroke="#1f8a2c" stroke-width="0.8"/><path d="M8.2 11.5H12.8M10.5 9.2V13.8" stroke="#fff" stroke-width="1.6"/></svg>
<svg style="position:absolute;left:29px;top:33px;overflow:visible" width="16" height="16" viewBox="0 0 16 16" ><path d="M0.5 2.5H6L7.5 4H14.5V13H0.5Z" fill="#d9bf7e" stroke="#b09050" stroke-width="0.8"/><path d="M2 6H16L14.5 13H0.5Z" fill="#ead7a0" stroke="#b09050" stroke-width="0.8"/><circle cx="12.5" cy="12.5" r="3.3" fill="#36b84a" stroke="#1f8a2c" stroke-width="0.8"/><path d="M10.2 12.5H14.8M12.5 10.2V14.8" stroke="#36b84a" stroke-width="1.6"/></svg>
<svg style="position:absolute;left:50px;top:33px;overflow:visible" width="16" height="16" viewBox="0 0 16 16" ><rect x="0.5" y="0.5" width="15" height="14.5" rx="1" fill="#3f78c0" stroke="#285a98"/><rect x="3" y="1.5" width="10" height="6" fill="#f4f6fa"/><rect x="4.5" y="9.5" width="7.5" height="5" fill="#c8d0dc"/><rect x="6" y="10.5" width="2" height="3" fill="#3f78c0"/></svg>
<svg style="position:absolute;left:74px;top:33px;overflow:visible" width="16" height="16" viewBox="0 0 16 16" ><rect x="4" y="1" width="9" height="5" fill="#fff" stroke="#444" stroke-width="1.2"/><rect x="0.5" y="5.5" width="16" height="6.5" rx="1.5" fill="#3a3a3a"/><rect x="4" y="10" width="9" height="4.5" fill="#fff" stroke="#444" stroke-width="1.2"/></svg>
<svg style="position:absolute;left:97px;top:33px;overflow:visible" width="16" height="16" viewBox="0 0 16 16" ><circle cx="5" cy="7" r="4.2" fill="#3a3a3a"/><path d="M5 7L10 12" stroke="#777" stroke-width="2"/><rect x="6.5" y="8" width="5" height="4" fill="#eee" stroke="#666" stroke-width="0.8"/></svg>
<svg style="position:absolute;left:116px;top:33px;overflow:visible" width="16" height="16" viewBox="0 0 16 16" ><path d="M1 1H8L11 4V13.5H1Z" fill="#f0f0f0" stroke="#9a9a9a" stroke-width="0.9"/><circle cx="9" cy="8" r="4" fill="#d8ecf4" stroke="#505050" stroke-width="1.3"/><path d="M11.8 10.8L15.5 14.5" stroke="#303030" stroke-width="1.8"/></svg>
<svg style="position:absolute;left:140px;top:33px;overflow:visible" width="16" height="16" viewBox="0 0 16 16" ><path d="M1 8L15 2" stroke="#a8a8a8" stroke-width="2"/><path d="M1 8L8 5" stroke="#d8d8d8" stroke-width="2.5"/><path d="M3 13L12 5" stroke="#505050" stroke-width="1.5"/><circle cx="12.5" cy="3.5" r="2.2" fill="none" stroke="#907040" stroke-width="1.5"/><ellipse cx="14" cy="8.5" rx="2.3" ry="1.8" fill="#a08050" stroke="#705020" stroke-width="0.8"/></svg>
<svg style="position:absolute;left:161px;top:33px;overflow:visible" width="16" height="16" viewBox="0 0 16 16" ><path d="M1 0.5H7L10 3.5V11.5H1Z" fill="#f4f4f4" stroke="#a0a0a0" stroke-width="0.9"/><path d="M6 4.5H12.5L15.5 7.5V15.5H6Z" fill="#fbfbfb" stroke="#a0a0a0" stroke-width="0.9"/></svg>
<svg style="position:absolute;left:182px;top:33px;overflow:visible" width="16" height="16" viewBox="0 0 16 16" ><rect x="1" y="2" width="10" height="12" rx="1" fill="#c88a28" stroke="#9a6818" stroke-width="0.8"/><rect x="3.5" y="0.5" width="5" height="3" fill="#777"/><path d="M8 5H13L16 8V15.5H8Z" fill="#fbfbfb" stroke="#9a9a9a" stroke-width="0.9"/></svg>
<svg style="position:absolute;left:202px;top:33px;overflow:visible" width="16" height="16" viewBox="0 0 16 16" ><path d="M15 1L6 10" stroke="#c89048" stroke-width="2.6"/><path d="M15 1L8 8" stroke="#e0b070" stroke-width="1"/><path d="M6 10L3 13L1.5 15L4.5 14L7 11Z" fill="#303030"/></svg>
<svg style="position:absolute;left:227px;top:33px;overflow:visible" width="16" height="16" viewBox="0 0 16 16" ><path d="M3.5 5.5A5.3 5.3 0 1 1 6 13.5" fill="none" stroke="#3a7ac8" stroke-width="2.3"/><path d="M0.5 2V8H6.5Z" fill="#3a7ac8"/></svg>
<svg style="position:absolute;left:249px;top:33px;overflow:visible" width="16" height="16" viewBox="0 0 16 16" ><path d="M12.5 5.5A5.3 5.3 0 1 0 10 13.5" fill="none" stroke="#b0b0b0" stroke-width="2.3"/><path d="M15.5 2V8H9.5Z" fill="#b0b0b0"/></svg>
<svg style="position:absolute;left:273px;top:33px;overflow:visible" width="16" height="16" viewBox="0 0 16 16" ><path d="M8 1V15M1 8H15" stroke="#2a6ab8" stroke-width="1.6"/><path d="M8 0L5 3.5H11Z M8 16L5 12.5H11Z M0 8L3.5 5V11Z M16 8L12.5 5V11Z" fill="#2a6ab8"/></svg>
<svg style="position:absolute;left:293px;top:33px;overflow:visible" width="16" height="16" viewBox="0 0 16 16" ><circle cx="7" cy="6.5" r="5" fill="#cfe6f2" stroke="#4a8ac0" stroke-width="1.6"/><path d="M10.5 10L14 13.5" stroke="#4a7aa8" stroke-width="2.2"/><path d="M14 1L12.7 3H15.3Z M14 10L12.7 8H15.3Z" fill="#2a6ab8"/><path d="M14 3V8" stroke="#2a6ab8" stroke-width="1" stroke-dasharray="1 1"/></svg>
<svg style="position:absolute;left:313px;top:33px;overflow:visible" width="16" height="16" viewBox="0 0 16 16" ><circle cx="7" cy="6.5" r="5" fill="#cfe6f2" stroke="#4a8ac0" stroke-width="1.6"/><path d="M10.5 10L14 13.5" stroke="#4a7aa8" stroke-width="2.2"/><path d="M10 3A3.6 3.6 0 1 1 11 9.5" fill="none" stroke="#2a6ab8" stroke-width="1.5"/></svg>
<svg style="position:absolute;left:339px;top:33px;overflow:visible" width="16" height="16" viewBox="0 0 16 16" ><rect x="1" y="1" width="4" height="4" fill="#3a60d0"/><rect x="6.5" y="1" width="4" height="4" fill="#e03030"/><rect x="12" y="1" width="4" height="4" fill="#30b030"/><path d="M1 7.5H10M1 9.5H9M1 11.5H8" stroke="#9a6a6a" stroke-width="1"/><path d="M1 13.5H8" stroke="#30a030" stroke-width="1"/><path d="M9 15L12 6.5L15 15M10 12H14" fill="none" stroke="#303030" stroke-width="1.4"/></svg>
<svg style="position:absolute;left:359px;top:33px;overflow:visible" width="16" height="16" viewBox="0 0 16 16" ><rect x="0.5" y="0.5" width="4" height="15" fill="#f0e6b8" stroke="#a09060" stroke-width="0.8"/><rect x="5" y="0.5" width="11" height="15" fill="#4a4a4a"/><rect x="6.5" y="2" width="8" height="5" fill="#2a2a2a"/><path d="M6 9H15M6 12H15" stroke="#ccc" stroke-width="0.8"/></svg>
<div style="position:absolute;left:70px;top:32px;width:1px;height:18px;background:#b0b0b0;box-shadow:1px 0 0 #fff"></div>
<div style="position:absolute;left:136px;top:32px;width:1px;height:18px;background:#b0b0b0;box-shadow:1px 0 0 #fff"></div>
<div style="position:absolute;left:223px;top:32px;width:1px;height:18px;background:#b0b0b0;box-shadow:1px 0 0 #fff"></div>
<div style="position:absolute;left:268px;top:32px;width:1px;height:18px;background:#b0b0b0;box-shadow:1px 0 0 #fff"></div>
<div style="position:absolute;left:334px;top:32px;width:1px;height:18px;background:#b0b0b0;box-shadow:1px 0 0 #fff"></div>
<div style="position:absolute;left:4px;top:54px;width:1px;height:18px;background:repeating-linear-gradient(#b8b8b8 0 1px,transparent 1px 3px)"></div>
<svg style="position:absolute;left:9px;top:55px;overflow:visible" width="16" height="16" viewBox="0 0 16 16" ><path d="M3 5L9 1L15 3L13 7L6 9Z" fill="#d8a060" stroke="#a06a30" stroke-width="0.7"/><rect x="0.5" y="9" width="15" height="6.5" fill="#d8d088" stroke="#a09850" stroke-width="0.8"/><path d="M0.5 9L3 6H14L15.5 9" fill="#eee6a0" stroke="#a09850" stroke-width="0.7"/></svg>
<div style="position:absolute;left:27px;top:57px;width:200px;height:13px;background:#fff;border:1px solid #a8a8a8;box-sizing:border-box"></div>
<div style="position:absolute;left:217px;top:58px;width:9px;height:11px;background:linear-gradient(#f4f4f4,#dcdcdc);border-left:1px solid #b8b8b8;box-sizing:border-box"></div>
<svg style="position:absolute;left:219px;top:62.0px;overflow:visible" width="6" height="4" viewBox="0 0 6 4" ><path d="M0 0H5L2.5 3Z" fill="#111"/></svg>
<svg style="position:absolute;left:30px;top:60px;overflow:visible" width="60" height="10" viewBox="0 0 60 10" ><circle cx="5" cy="4" r="3.2" fill="#20b030" stroke="#108020" stroke-width="0.6"/><rect x="12.5" y="2" width="9" height="4" rx="2" fill="#cfe2f4" stroke="#5a90c8" stroke-width="0.8" transform="rotate(-12 17 4)"/><path d="M29 3.5A2 2 0 0 1 33 3.5V5" fill="none" stroke="#666" stroke-width="0.9"/><rect x="30.5" y="4.5" width="5.5" height="4.5" fill="#e8c020" stroke="#a08010" stroke-width="0.6"/><circle cx="46" cy="4.5" r="3.8" fill="#fff" stroke="#333" stroke-width="0.9"/></svg><div style="position:absolute;left:86px;top:61.5px;font-size:7.8px;line-height:1;color:#222;white-space:nowrap;">0</div>
<div style="position:absolute;left:348px;top:54px;width:1px;height:18px;background:repeating-linear-gradient(#b8b8b8 0 1px,transparent 1px 3px)"></div>
<div style="position:absolute;left:351px;top:57px;width:78px;height:13px;background:#fff;border:1px solid #a8a8a8;box-sizing:border-box"></div>
<div style="position:absolute;left:419px;top:58px;width:9px;height:11px;background:linear-gradient(#f4f4f4,#dcdcdc);border-left:1px solid #b8b8b8;box-sizing:border-box"></div>
<svg style="position:absolute;left:421px;top:62.0px;overflow:visible" width="6" height="4" viewBox="0 0 6 4" ><path d="M0 0H5L2.5 3Z" fill="#111"/></svg>
<svg style="position:absolute;left:355.5px;top:59.5px;overflow:visible" width="9" height="9" viewBox="0 0 9 9" ><circle cx="4" cy="4" r="3.2" fill="none" stroke="#333" stroke-width="0.9"/></svg><div style="position:absolute;left:366px;top:61px;font-size:7.8px;line-height:1;color:#222;white-space:nowrap;letter-spacing:-0.25px">ByLayer</div>
<div style="position:absolute;left:431px;top:54px;width:1px;height:18px;background:#b0b0b0;box-shadow:1px 0 0 #fff"></div>
<div style="position:absolute;left:433px;top:57px;width:78px;height:13px;background:#fbfbfb;border:1px solid #a8a8a8;box-sizing:border-box"></div>
<div style="position:absolute;left:501px;top:58px;width:9px;height:11px;background:linear-gradient(#f4f4f4,#dcdcdc);border-left:1px solid #b8b8b8;box-sizing:border-box"></div>
<svg style="position:absolute;left:503px;top:62.0px;overflow:visible" width="6" height="4" viewBox="0 0 6 4" ><path d="M0 0H5L2.5 3Z" fill="#111"/></svg>
<div style="position:absolute;left:434.5px;top:61px;font-size:7.8px;line-height:1;color:#222;white-space:nowrap;letter-spacing:-0.25px">ByLayer</div><div style="position:absolute;left:471px;top:61px;font-size:7.8px;line-height:1;color:#222;white-space:nowrap;letter-spacing:-0.35px">Solid line</div>
<div style="position:absolute;left:513px;top:54px;width:1px;height:18px;background:#b0b0b0;box-shadow:1px 0 0 #fff"></div>
<div style="position:absolute;left:515px;top:57px;width:78px;height:13px;background:#fff;border:1px solid #a8a8a8;box-sizing:border-box"></div>
<div style="position:absolute;left:583px;top:58px;width:9px;height:11px;background:linear-gradient(#f4f4f4,#dcdcdc);border-left:1px solid #b8b8b8;box-sizing:border-box"></div>
<svg style="position:absolute;left:585px;top:62.0px;overflow:visible" width="6" height="4" viewBox="0 0 6 4" ><path d="M0 0H5L2.5 3Z" fill="#111"/></svg>
<div style="position:absolute;left:518px;top:63px;width:21px;height:1px;background:#666"></div><div style="position:absolute;left:541px;top:61px;font-size:7.8px;line-height:1;color:#222;white-space:nowrap;letter-spacing:-0.25px">ByLayer</div>
<div style="position:absolute;left:4px;top:77px;width:1px;height:18px;background:repeating-linear-gradient(#b8b8b8 0 1px,transparent 1px 3px)"></div>
<svg style="position:absolute;left:9px;top:78px;overflow:visible" width="16" height="16" viewBox="0 0 16 16" ><path d="M4 6L13 15" stroke="#111" stroke-width="3.2"/><path d="M3.5 5.5L6 8" stroke="#fff" stroke-width="2.2"/><path d="M8 2.5L9.5 1M9 4.5H11M6.5 1.5V0" stroke="#888" stroke-width="0.8"/></svg>
<svg style="position:absolute;left:33px;top:78px;overflow:visible" width="16" height="16" viewBox="0 0 16 16" ><rect x="2" y="1" width="4" height="14" rx="1" fill="#bdbdbd" stroke="#707070" stroke-width="0.8"/><path d="M0 6.5H15M0 11.5H15" stroke="#303030" stroke-width="1.1"/><path d="M0 9H15" stroke="#e04040" stroke-width="1.2"/></svg>
<svg style="position:absolute;left:54px;top:78px;overflow:visible" width="16" height="16" viewBox="0 0 16 16" ><rect x="0.5" y="1" width="11" height="5" rx="1" fill="#c8c8c8" stroke="#707070" stroke-width="0.8"/><rect x="3" y="6" width="5" height="9" fill="#a8a8a8" stroke="#707070" stroke-width="0.8"/><path d="M5 15L15 5" stroke="#e0b020" stroke-width="3.2"/><path d="M5 15L15 5" stroke="#806010" stroke-width="0.6" opacity="0.6"/><circle cx="5" cy="15" r="1" fill="#303030"/><path d="M13.8 6.2L16.2 3.8" stroke="#e07070" stroke-width="2.4"/></svg>
<svg style="position:absolute;left:75px;top:78px;overflow:visible" width="16" height="16" viewBox="0 0 16 16" ><rect x="0.5" y="1" width="11" height="4" rx="1" fill="#c8c8c8" stroke="#707070" stroke-width="0.8"/><path d="M0 6.5H12" stroke="#303030"/><rect x="0.5" y="8" width="11" height="3" fill="#b8b8b8" stroke="#707070" stroke-width="0.8"/><rect x="3" y="11" width="5" height="4.5" fill="#a8a8a8"/><circle cx="11.5" cy="11.5" r="4.3" fill="#36b84a" stroke="#1f8a2c" stroke-width="0.8"/><path d="M9.2 11.5H13.8M11.5 9.2V13.8" stroke="#fff" stroke-width="1.6"/></svg>
<svg style="position:absolute;left:95px;top:78px;overflow:visible" width="16" height="16" viewBox="0 0 16 16" ><rect x="4.5" y="1" width="11" height="5" rx="1" fill="#c8c8c8" stroke="#707070" stroke-width="0.8"/><path d="M4 7H16" stroke="#303030"/><rect x="7" y="8" width="5" height="7" fill="#a8a8a8" stroke="#707070" stroke-width="0.8"/><path d="M1 15L11 5" stroke="#e0b020" stroke-width="3.2"/><path d="M1 15L11 5" stroke="#806010" stroke-width="0.6" opacity="0.6"/><circle cx="1" cy="15" r="1" fill="#303030"/><path d="M9.8 6.2L12.2 3.8" stroke="#e07070" stroke-width="2.4"/></svg>
<svg style="position:absolute;left:121px;top:78px;overflow:visible" width="16" height="16" viewBox="0 0 16 16" ><path d="M2.5 1V15M12.5 1V15" stroke="#777" stroke-width="1.6"/><path d="M0 4H15" stroke="#777" stroke-width="1"/><path d="M7.5 1V15" stroke="#e05050" stroke-width="1" stroke-dasharray="2 1"/></svg>
<svg style="position:absolute;left:140px;top:78px;overflow:visible" width="16" height="16" viewBox="0 0 16 16" ><rect x="0.5" y="1" width="12" height="12" rx="1.5" fill="#d0d0d0" stroke="#505050" stroke-width="1"/><circle cx="6" cy="7" r="3.5" fill="#fff" stroke="#333" stroke-width="1"/><path d="M6 15L15.5 5" stroke="#e0b020" stroke-width="3.2"/><path d="M6 15L15.5 5" stroke="#806010" stroke-width="0.6" opacity="0.6"/><circle cx="6" cy="15" r="1" fill="#303030"/><path d="M14.3 6.2L16.7 3.8" stroke="#e07070" stroke-width="2.4"/></svg>
<svg style="position:absolute;left:162px;top:78px;overflow:visible" width="16" height="16" viewBox="0 0 16 16" ><rect x="0.5" y="0.5" width="14.5" height="13" fill="#fafafa" stroke="#555" stroke-width="1"/><path d="M0.5 3.5H15M0.5 6.5H15M0.5 9.5H15M5 3.5V14M10 3.5V14" stroke="#888" stroke-width="0.8"/><text x="1" y="15.5" font-size="7" font-family="Liberation Sans" font-weight="bold" fill="#222">500</text></svg>
<svg style="position:absolute;left:182px;top:78px;overflow:visible" width="16" height="16" viewBox="0 0 16 16" ><rect x="0.5" y="0.5" width="14.5" height="14" fill="#f4f0d8" stroke="#607090" stroke-width="1"/><rect x="0.5" y="0.5" width="14.5" height="3.5" fill="#a8c4e0"/><path d="M0.5 6H15M0.5 9H15M0.5 12H15M5 4V15M10 4V15" stroke="#9aa" stroke-width="0.7"/><circle cx="6" cy="8" r="2.5" fill="none" stroke="#444"/><path d="M3 15L15 3" stroke="#e0b020" stroke-width="3.2"/><path d="M3 15L15 3" stroke="#806010" stroke-width="0.6" opacity="0.6"/><circle cx="3" cy="15" r="1" fill="#303030"/><path d="M13.8 4.2L16.2 1.8" stroke="#e07070" stroke-width="2.4"/></svg>
<svg style="position:absolute;left:203px;top:78px;overflow:visible" width="16" height="16" viewBox="0 0 16 16" ><path d="M1.5 14L7 8" stroke="#111" stroke-width="1.2"/><path d="M0.5 15L1.5 10L5.5 13Z" fill="#111"/><text x="8" y="11" font-size="10" font-family="Liberation Sans" font-weight="bold" fill="#111">5</text><path d="M5 8H8" stroke="#111"/></svg>
<svg style="position:absolute;left:228px;top:78px;overflow:visible" width="16" height="16" viewBox="0 0 16 16" ><path d="M0.5 9L3 8L6 15L10 2H15" fill="none" stroke="#222" stroke-width="1.1"/></svg>
<svg style="position:absolute;left:248px;top:78px;overflow:visible" width="16" height="16" viewBox="0 0 16 16" ><path d="M3 14V6" stroke="#2040d0" stroke-width="1.8"/><path d="M3 4L1 7H5Z" fill="#2040d0"/><path d="M6 6L8 9L12 2H15" fill="none" stroke="#111" stroke-width="1.6"/><path d="M0 9H16" stroke="#111" stroke-width="0.9"/><path d="M7 15Q9 10 11 15" fill="none" stroke="#999" stroke-width="1.1"/></svg>
<svg style="position:absolute;left:268px;top:78px;overflow:visible" width="16" height="16" viewBox="0 0 16 16" ><path d="M0 8H16M6 1V15" stroke="#222" stroke-width="1.1"/><path d="M6 2L14 8L6 14" fill="none" stroke="#222" stroke-width="1"/></svg>
<svg style="position:absolute;left:294px;top:78px;overflow:visible" width="16" height="16" viewBox="0 0 16 16" ><circle cx="9.5" cy="6" r="5.5" fill="#fff" stroke="#222" stroke-width="1.2"/><text x="7" y="9.5" font-size="8" font-family="Liberation Serif" font-weight="bold" fill="#111">1</text><path d="M5.5 10L1 15" stroke="#444" stroke-width="1.4"/></svg>
<svg style="position:absolute;left:316px;top:78px;overflow:visible" width="16" height="16" viewBox="0 0 16 16" ><circle cx="8" cy="6" r="5.5" fill="#fff" stroke="#333" stroke-width="1.1"/><text x="5.5" y="9.5" font-size="8" font-family="Liberation Serif" font-weight="bold" fill="#111">1</text><path d="M2 15L15 4" stroke="#e0b020" stroke-width="3.2"/><path d="M2 15L15 4" stroke="#806010" stroke-width="0.6" opacity="0.6"/><circle cx="2" cy="15" r="1" fill="#303030"/><path d="M13.8 5.2L16.2 2.8" stroke="#e07070" stroke-width="2.4"/></svg>
<svg style="position:absolute;left:338px;top:78px;overflow:visible" width="16" height="16" viewBox="0 0 16 16" ><rect x="0.5" y="0.5" width="14.5" height="13.5" fill="#fbfbf4" stroke="#606a80" stroke-width="1"/><rect x="0.5" y="0.5" width="14.5" height="3" fill="#9cb8d8"/><path d="M0.5 6H15M0.5 9H15M0.5 12H15M5 3.5V14M10 3.5V14" stroke="#8a8a8a" stroke-width="0.7"/><circle cx="11.5" cy="12" r="4.3" fill="#36b84a" stroke="#1f8a2c" stroke-width="0.8"/><path d="M9.2 12H13.8M11.5 9.7V14.3" stroke="#fff" stroke-width="1.6"/></svg>
<svg style="position:absolute;left:360px;top:78px;overflow:visible" width="16" height="16" viewBox="0 0 16 16" ><rect x="0.5" y="0.5" width="14.5" height="13.5" fill="#fbfbf4" stroke="#606a80" stroke-width="1"/><rect x="0.5" y="0.5" width="14.5" height="3" fill="#9cb8d8"/><path d="M0.5 6H15M0.5 9H15M0.5 12H15M5 3.5V14M10 3.5V14" stroke="#8a8a8a" stroke-width="0.7"/><path d="M4 15.5L15.5 4" stroke="#e0b020" stroke-width="3.2"/><path d="M4 15.5L15.5 4" stroke="#806010" stroke-width="0.6" opacity="0.6"/><circle cx="4" cy="15.5" r="1" fill="#303030"/><path d="M14.3 5.2L16.7 2.8" stroke="#e07070" stroke-width="2.4"/></svg>
<svg style="position:absolute;left:380px;top:78px;overflow:visible" width="16" height="16" viewBox="0 0 16 16" ><rect x="0.5" y="0.5" width="14.5" height="13.5" fill="#fbfbf4" stroke="#606a80" stroke-width="1"/><rect x="0.5" y="0.5" width="14.5" height="3" fill="#9cb8d8"/><path d="M0.5 6H15M0.5 9H15M0.5 12H15M5 3.5V14M10 3.5V14" stroke="#8a8a8a" stroke-width="0.7"/><path d="M1 13L6 9L7 11L13 8L10 14Z" fill="#e8c030" stroke="#b08a10" stroke-width="0.6"/></svg>
<svg style="position:absolute;left:404px;top:78px;overflow:visible" width="16" height="16" viewBox="0 0 16 16" ><rect x="0.5" y="0.5" width="14.5" height="13.5" fill="#fbfbf4" stroke="#606a80" stroke-width="1"/><rect x="0.5" y="0.5" width="14.5" height="3" fill="#9cb8d8"/><path d="M0.5 6H15M0.5 9H15M0.5 12H15M5 3.5V14M10 3.5V14" stroke="#8a8a8a" stroke-width="0.7"/><path d="M10.5 5L16 16H5Z" fill="#fff" stroke="#333" stroke-width="1"/><text x="8.5" y="14.5" font-size="7" font-family="Liberation Serif" font-weight="bold" fill="#111">1</text></svg>
<svg style="position:absolute;left:425px;top:78px;overflow:visible" width="16" height="16" viewBox="0 0 16 16" ><rect x="4" y="0.5" width="11" height="11" fill="#fbfbf4" stroke="#606a80" stroke-width="0.8"/><rect x="4" y="0.5" width="11" height="3" fill="#9cb8d8"/><path d="M0 5H10M0 8H9" stroke="#2a6ad0" stroke-width="1.6"/><path d="M11.0 6L16 16H6Z" fill="#fff" stroke="#333" stroke-width="1"/><text x="9.0" y="14.5" font-size="7" font-family="Liberation Serif" font-weight="bold" fill="#111">1</text></svg>
<svg style="position:absolute;left:446px;top:78px;overflow:visible" width="16" height="16" viewBox="0 0 16 16" ><path d="M8 1L15.5 15H0.5Z" fill="#fff" stroke="#333" stroke-width="1.1"/><text x="6" y="13.5" font-size="8" font-family="Liberation Serif" font-weight="bold" fill="#111">1</text></svg>
<svg style="position:absolute;left:466px;top:78px;overflow:visible" width="16" height="16" viewBox="0 0 16 16" ><rect x="0.5" y="0.5" width="14.5" height="13.5" fill="#fbfbf4" stroke="#606a80" stroke-width="1"/><rect x="0.5" y="0.5" width="14.5" height="3" fill="#9cb8d8"/><path d="M0.5 6H15M0.5 9H15M0.5 12H15M5 3.5V14M10 3.5V14" stroke="#8a8a8a" stroke-width="0.7"/><path d="M1 11L12 1" stroke="#e0b020" stroke-width="3.2"/><path d="M1 11L12 1" stroke="#806010" stroke-width="0.6" opacity="0.6"/><circle cx="1" cy="11" r="1" fill="#303030"/><path d="M10.8 2.2L13.2 -0.19999999999999996" stroke="#e07070" stroke-width="2.4"/><path d="M10.5 5L16 16H5Z" fill="#fff" stroke="#333" stroke-width="1"/><text x="8.5" y="14.5" font-size="7" font-family="Liberation Serif" font-weight="bold" fill="#111">1</text></svg>
<svg style="position:absolute;left:490px;top:78px;overflow:visible" width="16" height="16" viewBox="0 0 16 16" ><rect x="0.5" y="4" width="8" height="11" fill="#3a7ac8" stroke="#20508a" stroke-width="0.8"/><path d="M2.5 4V1.5H6.5V4" fill="none" stroke="#333" stroke-width="1.2"/><rect x="8" y="3" width="7.5" height="12.5" fill="#f0f0f0" stroke="#777" stroke-width="0.8"/><path d="M9 7H15M9 10H15" stroke="#888" stroke-width="0.8"/><path d="M9.5 13.5L12 11.5L14.5 13.5" stroke="#30a040" stroke-width="1.8" fill="none"/></svg>
<div style="position:absolute;left:28px;top:77px;width:1px;height:18px;background:#b0b0b0;box-shadow:1px 0 0 #fff"></div>
<div style="position:absolute;left:115px;top:77px;width:1px;height:18px;background:#b0b0b0;box-shadow:1px 0 0 #fff"></div>
<div style="position:absolute;left:223px;top:77px;width:1px;height:18px;background:#b0b0b0;box-shadow:1px 0 0 #fff"></div>
<div style="position:absolute;left:288px;top:77px;width:1px;height:18px;background:#b0b0b0;box-shadow:1px 0 0 #fff"></div>
<div style="position:absolute;left:334px;top:77px;width:1px;height:18px;background:#b0b0b0;box-shadow:1px 0 0 #fff"></div>
<div style="position:absolute;left:400px;top:77px;width:1px;height:18px;background:#b0b0b0;box-shadow:1px 0 0 #fff"></div>
<div style="position:absolute;left:486px;top:77px;width:1px;height:18px;background:#b0b0b0;box-shadow:1px 0 0 #fff"></div></div>
<div style="position:absolute;left:54px;top:64px;width:576px;height:1px;background:#8a94a4"></div>
<div style="position:absolute;left:0px;top:64px;width:54px;height:1px;background:#b8c4d0"></div>
<div style="position:absolute;left:630px;top:64px;width:330px;height:1px;background:#b8c4d0"></div>
<div style="position:absolute;left:0px;top:162px;width:960px;height:438px;background:#f0eff1"></div>
<div style="position:absolute;left:0px;top:161px;width:960px;height:1px;background:#d2d2d2"></div>
<div style="position:absolute;left:4px;top:166px;width:16px;height:1px;background:repeating-linear-gradient(90deg,#b8b8b8 0 1px,transparent 1px 3px)"></div>
<svg style="position:absolute;left:3px;top:171px;overflow:visible" width="16" height="16" viewBox="0 0 16 16" ><path d="M2 2L13.5 14" stroke="#333" stroke-width="1.1"/><circle cx="2.2" cy="2.2" r="1.4" fill="#9a9a60" stroke="#5a5a30" stroke-width="0.6"/><circle cx="13.5" cy="14" r="1.4" fill="#9a9a60" stroke="#5a5a30" stroke-width="0.6"/></svg>
<svg style="position:absolute;left:3px;top:191px;overflow:visible" width="16" height="16" viewBox="0 0 16 16" ><path d="M1 1L15 15" stroke="#222" stroke-width="1.1"/><path d="M0.5 0.5L3.5 1.5L1.5 3.5Z M15.5 15.5L12.5 14.5L14.5 12.5Z" fill="#111"/><circle cx="8" cy="8" r="1.3" fill="#9a9a60" stroke="#5a5a30" stroke-width="0.6"/></svg>
<svg style="position:absolute;left:3px;top:211px;overflow:visible" width="16" height="16" viewBox="0 0 16 16" ><path d="M4 1.5H12L15.5 8L12 14.5H4L0.5 8Z" fill="none" stroke="#333" stroke-width="1.1"/></svg>
<svg style="position:absolute;left:3px;top:230px;overflow:visible" width="16" height="16" viewBox="0 0 16 16" ><rect x="2" y="3.5" width="12" height="9" fill="none" stroke="#333" stroke-width="1.1"/><circle cx="2" cy="3.5" r="1.2" fill="#9a9a60" stroke="#5a5a30" stroke-width="0.6"/><circle cx="14" cy="12.5" r="1.2" fill="#9a9a60" stroke="#5a5a30" stroke-width="0.6"/></svg>
<svg style="position:absolute;left:3px;top:251px;overflow:visible" width="16" height="16" viewBox="0 0 16 16" ><path d="M5 15Q0 8 6 3Q12 0 14 6" fill="none" stroke="#333" stroke-width="1.1"/><circle cx="5.5" cy="15" r="1.4" fill="#9a9a60" stroke="#5a5a30" stroke-width="0.6"/><circle cx="14" cy="6" r="1.4" fill="#9a9a60" stroke="#5a5a30" stroke-width="0.6"/></svg>
<svg style="position:absolute;left:3px;top:271px;overflow:visible" width="16" height="16" viewBox="0 0 16 16" ><path d="M1 1.5Q10 2 15 13" fill="none" stroke="#333" stroke-width="1.1"/><circle cx="1.3" cy="1.5" r="1.4" fill="#9a9a60" stroke="#5a5a30" stroke-width="0.6"/><circle cx="10.5" cy="5.5" r="1.4" fill="#9a9a60" stroke="#5a5a30" stroke-width="0.6"/><circle cx="15" cy="13" r="1.4" fill="#9a9a60" stroke="#5a5a30" stroke-width="0.6"/></svg>
<svg style="position:absolute;left:3px;top:291px;overflow:visible" width="16" height="16" viewBox="0 0 16 16" ><circle cx="8" cy="8" r="7" fill="none" stroke="#333" stroke-width="1.1"/><path d="M8 8L12 12" stroke="#333" stroke-width="0.9"/><circle cx="8" cy="8" r="1.2" fill="#9a9a60" stroke="#5a5a30" stroke-width="0.6"/><circle cx="12" cy="12" r="1.2" fill="#9a9a60" stroke="#5a5a30" stroke-width="0.6"/></svg>
<svg style="position:absolute;left:3px;top:311px;overflow:visible" width="16" height="16" viewBox="0 0 16 16" ><ellipse cx="8" cy="8" rx="8" ry="4.2" transform="rotate(-40 8 8)" fill="none" stroke="#333" stroke-width="1.1"/><circle cx="8" cy="8" r="1.1" fill="#9a9a60" stroke="#5a5a30" stroke-width="0.6"/><circle cx="13.5" cy="2.5" r="1.2" fill="#9a9a60" stroke="#5a5a30" stroke-width="0.6"/><circle cx="2.5" cy="13.5" r="1.2" fill="#9a9a60" stroke="#5a5a30" stroke-width="0.6"/></svg>
<svg style="position:absolute;left:3px;top:331px;overflow:visible" width="16" height="16" viewBox="0 0 16 16" ><path d="M2 14Q1 8 8 3Q14 0 12 6Q10 12 6 14" fill="none" stroke="#333" stroke-width="1.1"/><circle cx="2" cy="14" r="1.3" fill="#9a9a60" stroke="#5a5a30" stroke-width="0.6"/><circle cx="8.5" cy="9" r="1.1" fill="#9a9a60" stroke="#5a5a30" stroke-width="0.6"/><circle cx="8" cy="14" r="1.3" fill="#9a9a60" stroke="#5a5a30" stroke-width="0.6"/></svg>
<svg style="position:absolute;left:3px;top:351px;overflow:visible" width="16" height="16" viewBox="0 0 16 16" ><circle cx="3" cy="2" r="1.5" fill="#9a9a60" stroke="#5a5a30" stroke-width="0.6"/><circle cx="12" cy="1.5" r="1.5" fill="#9a9a60" stroke="#5a5a30" stroke-width="0.6"/><circle cx="6.5" cy="6" r="1.5" fill="#9a9a60" stroke="#5a5a30" stroke-width="0.6"/><circle cx="2" cy="11" r="1.5" fill="#9a9a60" stroke="#5a5a30" stroke-width="0.6"/><circle cx="8" cy="10.5" r="1.5" fill="#9a9a60" stroke="#5a5a30" stroke-width="0.6"/><circle cx="13.5" cy="13" r="1.5" fill="#9a9a60" stroke="#5a5a30" stroke-width="0.6"/></svg>
<svg style="position:absolute;left:3px;top:372px;overflow:visible" width="16" height="16" viewBox="0 0 16 16" ><path d="M1 13Q2 6 6 8Q10 11 12 5Q13 2 15 2" fill="none" stroke="#555" stroke-width="1.6"/><circle cx="1.5" cy="13.5" r="1.3" fill="#9a9a60" stroke="#5a5a30" stroke-width="0.6"/><circle cx="14.5" cy="2" r="1.3" fill="#9a9a60" stroke="#5a5a30" stroke-width="0.6"/></svg>
<svg style="position:absolute;left:3px;top:391px;overflow:visible" width="16" height="16" viewBox="0 0 16 16" ><defs><pattern id="hp" width="2" height="2" patternUnits="userSpaceOnUse"><rect width="2" height="2" fill="#c0c0c0"/><rect width="1" height="1" fill="#707070"/></pattern></defs><rect x="1" y="1" width="14" height="14" fill="url(#hp)"/></svg>
<svg style="position:absolute;left:3px;top:410px;overflow:visible" width="16" height="16" viewBox="0 0 16 16" ><path d="M1 1H9L12 4V14H1Z" fill="#fafafa" stroke="#9a9a9a" stroke-width="0.9"/><text x="2.5" y="10" font-size="9" font-family="Liberation Serif" fill="#222">A</text><circle cx="9.5" cy="2.5" r="1.5" fill="none" stroke="#888" stroke-width="0.6"/><circle cx="11.5" cy="11.5" r="4.3" fill="#36b84a" stroke="#1f8a2c" stroke-width="0.8"/><path d="M9.2 11.5H13.8M11.5 9.2V13.8" stroke="#fff" stroke-width="1.6"/></svg>
<svg style="position:absolute;left:3px;top:431px;overflow:visible" width="16" height="16" viewBox="0 0 16 16" ><path d="M3 1.5H14Q15.5 1.5 15 4L13 12Q12.5 14 10 14H2Q0.5 14 1 12L1.5 4Q2 1.5 3 1.5Z" fill="#f0c840" stroke="#a08010" stroke-width="1"/><path d="M5 7H11V10H7L6 11V10H5Z" fill="#fff" stroke="#a08010" stroke-width="0.7"/></svg>
<svg style="position:absolute;left:3px;top:450px;overflow:visible" width="16" height="16" viewBox="0 0 16 16" ><rect x="1.5" y="1.5" width="13" height="13" fill="#fff" stroke="#a8a8a8" stroke-width="0.9"/><text x="3" y="7.5" font-size="6" font-weight="bold" font-family="Liberation Sans" fill="#111">A</text><path d="M3 10H13M3 12.5H13" stroke="#ccc" stroke-width="0.7"/></svg>
<svg style="position:absolute;left:3px;top:475px;overflow:visible" width="16" height="16" viewBox="0 0 16 16" ><rect x="1.5" y="1" width="13" height="6.5" fill="#fff" stroke="#a8a8a8" stroke-width="0.9"/><text x="3.2" y="6.3" font-size="5.5" font-weight="bold" font-family="Liberation Sans" fill="#111">A</text></svg>
<svg style="position:absolute;left:3px;top:490px;overflow:visible" width="16" height="16" viewBox="0 0 16 16" ><path d="M2.50 2.50A1.43 1.43 0 0 1 5.25 2.50A1.43 1.43 0 0 1 8.00 2.50A1.43 1.43 0 0 1 10.75 2.50A1.43 1.43 0 0 1 13.50 2.50A1.56 1.56 0 0 1 13.50 5.50A1.56 1.56 0 0 1 13.50 8.50A1.56 1.56 0 0 1 13.50 11.50A1.43 1.43 0 0 1 10.75 11.50A1.43 1.43 0 0 1 8.00 11.50A1.43 1.43 0 0 1 5.25 11.50A1.43 1.43 0 0 1 2.50 11.50A1.56 1.56 0 0 1 2.50 8.50A1.56 1.56 0 0 1 2.50 5.50A1.56 1.56 0 0 1 2.50 2.50Z" fill="none" stroke="#444" stroke-width="0.9"/><path d="M3 14.5L15 4" stroke="#e0b020" stroke-width="3.2"/><path d="M3 14.5L15 4" stroke="#806010" stroke-width="0.6" opacity="0.6"/><circle cx="3" cy="14.5" r="1" fill="#303030"/><path d="M13.8 5.2L16.2 2.8" stroke="#e07070" stroke-width="2.4"/></svg>
<svg style="position:absolute;left:3px;top:511px;overflow:visible" width="16" height="16" viewBox="0 0 16 16" ><path d="M2.50 2.50A1.43 1.43 0 0 1 5.25 2.50A1.43 1.43 0 0 1 8.00 2.50A1.43 1.43 0 0 1 10.75 2.50A1.43 1.43 0 0 1 13.50 2.50A1.43 1.43 0 0 1 13.50 5.25A1.43 1.43 0 0 1 13.50 8.00A1.43 1.43 0 0 1 13.50 10.75A1.43 1.43 0 0 1 13.50 13.50A1.43 1.43 0 0 1 10.75 13.50A1.43 1.43 0 0 1 8.00 13.50A1.43 1.43 0 0 1 5.25 13.50A1.43 1.43 0 0 1 2.50 13.50A1.43 1.43 0 0 1 2.50 10.75A1.43 1.43 0 0 1 2.50 8.00A1.43 1.43 0 0 1 2.50 5.25A1.43 1.43 0 0 1 2.50 2.50Z" fill="none" stroke="#444" stroke-width="0.9"/></svg>
<svg style="position:absolute;left:3px;top:532px;overflow:visible" width="16" height="16" viewBox="0 0 16 16" ><path d="M8.00 2.00A2.39 2.39 0 0 1 12.24 3.76A2.39 2.39 0 0 1 14.00 8.00A2.39 2.39 0 0 1 12.24 12.24A2.39 2.39 0 0 1 8.00 14.00A2.39 2.39 0 0 1 3.76 12.24A2.39 2.39 0 0 1 2.00 8.00A2.39 2.39 0 0 1 3.76 3.76A2.39 2.39 0 0 1 8.00 2.00Z" fill="none" stroke="#444" stroke-width="0.9"/></svg>
<svg style="position:absolute;left:3px;top:551px;overflow:visible" width="16" height="16" viewBox="0 0 16 16" ><path d="M6.00 3.50A2.22 2.22 0 0 1 10.00 2.00A2.24 2.24 0 0 1 12.50 5.50A2.33 2.33 0 0 1 14.50 9.50A2.45 2.45 0 0 1 10.50 12.00A2.03 2.03 0 0 1 7.50 14.50A2.56 2.56 0 0 1 3.00 12.50A1.98 1.98 0 0 1 1.50 9.00A1.87 1.87 0 0 1 3.50 6.00A1.84 1.84 0 0 1 6.00 3.50Z" fill="none" stroke="#444" stroke-width="0.9"/></svg>
<div style="position:absolute;left:23px;top:162px;width:904px;height:393px;background:#000"></div>
<div style="position:absolute;left:0;top:0;width:960px;height:600px;pointer-events:none"><svg style="position:absolute;left:0;top:0" width="960" height="600" font-family="Liberation Sans"><rect x="194" y="269.5" width="419" height="149.3" rx="17" ry="17" fill="none" stroke="#c4c4c4" stroke-width="1.2"/><path d="M500.7 298.7 V250.7 A16 16 0 0 0 484.7 234.7 H478.3 A5 5 0 0 1 473.3 229.7 V182.3 A5 5 0 0 1 478.3 177.3 H566.4 A5 5 0 0 1 571.4 182.3 V229.7 A5 5 0 0 1 566.4 234.7 H561 A17.6 17.6 0 0 0 543.4 252.3 V298.7" fill="none" stroke="#c4c4c4" stroke-width="1.1"/><path d="M486.3 183.3H547.7L552.7 188.3V225.7L547.7 230.7H486.3L481.3 225.7V188.3Z" fill="none" stroke="#c4c4c4" stroke-width="1.1"/><rect x="496.8" y="295.3" width="7.4" height="7.4" fill="none" stroke="#f0f0f0" stroke-width="1"/><path d="M500.7 298.7H547 M542 295.2L547 298.7L542 302.2 M500.7 298.7V251.3 M497.5 256.5L500.7 251.3L503.9 256.5" fill="none" stroke="#f0f0f0" stroke-width="1.1"/><path d="M551 295L558 302.5M558 295L551 302.5" stroke="#f0f0f0" stroke-width="1"/><path d="M498.3 241.5L501.3 246L504.3 241.5M501.3 246V250" fill="none" stroke="#f0f0f0" stroke-width="1"/><circle cx="227.1" cy="306.6" r="10.6" fill="none" stroke="#c4c4c4" stroke-width="1"/><circle cx="273.4" cy="314.4" r="10.9" fill="none" stroke="#c4c4c4" stroke-width="1"/><circle cx="227.1" cy="379.4" r="10.5" fill="none" stroke="#c4c4c4" stroke-width="1"/><circle cx="273.5" cy="379.4" r="10.9" fill="none" stroke="#c4c4c4" stroke-width="1"/><circle cx="379.8" cy="314.4" r="10.7" fill="none" stroke="#c4c4c4" stroke-width="1"/><circle cx="379.8" cy="379" r="10.7" fill="none" stroke="#c4c4c4" stroke-width="1"/><circle cx="431.9" cy="314.4" r="10.8" fill="none" stroke="#c4c4c4" stroke-width="1"/><circle cx="473" cy="314.4" r="10.8" fill="none" stroke="#c4c4c4" stroke-width="1"/><circle cx="432" cy="372.4" r="10.8" fill="none" stroke="#c4c4c4" stroke-width="1"/><circle cx="473" cy="379.4" r="10.8" fill="none" stroke="#c4c4c4" stroke-width="1"/><circle cx="535.9" cy="371.9" r="11" fill="none" stroke="#c4c4c4" stroke-width="1"/><circle cx="577.5" cy="371.9" r="11.1" fill="none" stroke="#c4c4c4" stroke-width="1"/><path d="M470.5 314.4H475.5M473 311.9V316.9" stroke="#888" stroke-width="0.8"/><text x="218.25" y="293.75" font-size="8.2" textLength="15.9" lengthAdjust="spacingAndGlyphs" font-weight="bold" fill="#f8f8f8">BAT</text><text x="210.75" y="326.7" font-size="8.2" textLength="36.34999999999999" lengthAdjust="spacingAndGlyphs" font-weight="bold" fill="#f8f8f8">EXT PWR</text><text x="261.8" y="288.7" font-size="8.2" textLength="25.9" lengthAdjust="spacingAndGlyphs" font-weight="bold" fill="#f8f8f8">START</text><text x="261.8" y="298.75" font-size="8.2" textLength="23.20000000000001" lengthAdjust="spacingAndGlyphs" font-weight="bold" fill="#f8f8f8">PUMP</text><text x="264.5" y="335.3" font-size="8.2" textLength="16.20000000000001" lengthAdjust="spacingAndGlyphs" font-weight="bold" fill="#f8f8f8">OFF</text><text x="217.8" y="365.8" font-size="8.2" textLength="17.599999999999987" lengthAdjust="spacingAndGlyphs" font-weight="bold" fill="#f8f8f8">GEN</text><text x="218.25" y="397.5" font-size="8.2" textLength="16.349999999999987" lengthAdjust="spacingAndGlyphs" font-weight="bold" fill="#f8f8f8">OFF</text><text x="264.3" y="356.3" font-size="8.2" textLength="21.9" lengthAdjust="spacingAndGlyphs" font-weight="bold" fill="#f8f8f8">SCAV</text><text x="266.5" y="367.5" font-size="8.2" textLength="13.500000000000023" lengthAdjust="spacingAndGlyphs" font-weight="bold" fill="#f8f8f8">AIR</text><text x="266.5" y="397.9" font-size="8.2" textLength="15.9" lengthAdjust="spacingAndGlyphs" font-weight="bold" fill="#f8f8f8">OFF</text><text x="360.9" y="290.4" font-size="8.2" textLength="41.00000000000002" lengthAdjust="spacingAndGlyphs" font-weight="bold" fill="#f8f8f8">ANTI-COLL</text><text x="371.5" y="299.7" font-size="8.2" textLength="14.9" lengthAdjust="spacingAndGlyphs" font-weight="bold" fill="#f8f8f8">LTS</text><text x="373.1" y="335.9" font-size="8.2" textLength="15.9" lengthAdjust="spacingAndGlyphs" font-weight="bold" fill="#f8f8f8">OFF</text><text x="368.5" y="358.2" font-size="8.2" textLength="16.9" lengthAdjust="spacingAndGlyphs" font-weight="bold" fill="#f8f8f8">POS</text><text x="370.9" y="366.2" font-size="8.2" textLength="9.9" lengthAdjust="spacingAndGlyphs" font-weight="bold" fill="#f8f8f8">LT</text><text x="370.5" y="400.5" font-size="8.2" textLength="16.099999999999987" lengthAdjust="spacingAndGlyphs" font-weight="bold" fill="#f8f8f8">OFF</text><text x="418.3" y="291.4" font-size="8.2" textLength="24.099999999999987" lengthAdjust="spacingAndGlyphs" font-weight="bold" fill="#f8f8f8">PITOT</text><text x="423.5" y="300.7" font-size="8.2" textLength="16.9" lengthAdjust="spacingAndGlyphs" font-weight="bold" fill="#f8f8f8">HTR</text><text x="423.5" y="335.9" font-size="8.2" textLength="15.9" lengthAdjust="spacingAndGlyphs" font-weight="bold" fill="#f8f8f8">OFF</text><text x="456.5" y="289.4" font-size="8.2" textLength="27.799999999999976" lengthAdjust="spacingAndGlyphs" font-weight="bold" fill="#f8f8f8">RE-IGN</text><text x="461.7" y="299.2" font-size="8.2" textLength="20.50000000000002" lengthAdjust="spacingAndGlyphs" font-weight="bold" fill="#f8f8f8">TEST</text><text x="464.8" y="336.9" font-size="8.2" textLength="16.4" lengthAdjust="spacingAndGlyphs" font-weight="bold" fill="#f8f8f8">OFF</text><text x="415.5" y="361.1" font-size="8.2" textLength="34.09999999999999" lengthAdjust="spacingAndGlyphs" font-weight="bold" fill="#f8f8f8">ANTI-ICE</text><text x="423.3" y="393.2" font-size="8.2" textLength="16.099999999999987" lengthAdjust="spacingAndGlyphs" font-weight="bold" fill="#f8f8f8">OFF</text><text x="463.3" y="360.4" font-size="8.2" textLength="17.4" lengthAdjust="spacingAndGlyphs" font-weight="bold" fill="#f8f8f8">UTIL</text><text x="462.7" y="368" font-size="8.2" textLength="19.00000000000002" lengthAdjust="spacingAndGlyphs" font-weight="bold" fill="#f8f8f8">PWR</text><text x="463.3" y="400.9" font-size="8.2" textLength="15.9" lengthAdjust="spacingAndGlyphs" font-weight="bold" fill="#f8f8f8">OFF</text><text x="523.3" y="359.2" font-size="8.2" textLength="21.00000000000002" lengthAdjust="spacingAndGlyphs" font-weight="bold" fill="#f8f8f8">YSAS</text><text x="527.4" y="396.9" font-size="8.2" textLength="15.9" lengthAdjust="spacingAndGlyphs" font-weight="bold" fill="#f8f8f8">OFF</text><text x="558.4" y="349.4" font-size="8.2" textLength="37.600000000000044" lengthAdjust="spacingAndGlyphs" font-weight="bold" fill="#f8f8f8">AVIONICS</text><text x="560.5" y="358.7" font-size="8.2" textLength="33.4" lengthAdjust="spacingAndGlyphs" font-weight="bold" fill="#f8f8f8">MASTER</text><text x="571.8" y="393.8" font-size="8.2" textLength="15.9" lengthAdjust="spacingAndGlyphs" font-weight="bold" fill="#f8f8f8">OFF</text><text x="209.8" y="299.5" font-size="6.5" textLength="5.599999999999989" lengthAdjust="spacingAndGlyphs" font-weight="bold" fill="#f8f8f8">O</text><text x="210.0" y="307" font-size="6.5" textLength="4.9" lengthAdjust="spacingAndGlyphs" font-weight="bold" fill="#f8f8f8">F</text><text x="210.0" y="314.5" font-size="6.5" textLength="4.9" lengthAdjust="spacingAndGlyphs" font-weight="bold" fill="#f8f8f8">F</text><rect x="237.5" y="178.5" width="4" height="4" fill="none" stroke="#f4f4f4" stroke-width="1.1"/><path d="M241 182.4L240.9 188.6L242.7 187.3L245 192.3L246.3 191.6L244.1 186.9L246.2 186.7Z" fill="#fff"/></svg></div>
<div style="position:absolute;left:927px;top:162px;width:10px;height:393px;background:#f0eff1"></div>
<svg style="position:absolute;left:929px;top:166px;overflow:visible" width="6" height="4" viewBox="0 0 6 4" ><path d="M0 4H6L3 0Z" fill="#333"/></svg>
<div style="position:absolute;left:927px;top:442px;width:9px;height:10px;background:linear-gradient(90deg,#e8e8e8,#d4d4d4);border:1px solid #c8c8c8;box-sizing:border-box"></div>
<svg style="position:absolute;left:929px;top:546px;overflow:visible" width="6" height="4" viewBox="0 0 6 4" ><path d="M0 0H6L3 4Z" fill="#555"/></svg>
<div style="position:absolute;left:959px;top:162px;width:1px;height:438px;background:#b4b4b4"></div>
<div style="position:absolute;left:937px;top:162px;width:1px;height:405px;background:#f8f8f8"></div>
<div style="position:absolute;left:941px;top:166px;width:16px;height:1px;background:repeating-linear-gradient(90deg,#b8b8b8 0 1px,transparent 1px 3px)"></div>
<svg style="position:absolute;left:940px;top:172px;overflow:visible" width="16" height="16" viewBox="0 0 16 16" ><path d="M1.5 11L10 2.5Q11.5 1 13 2.5L15 4.5Q16 6 14.5 7.5L6 15Q4.5 16 3 14.5L1.5 13Q0.5 12 1.5 11Z" fill="#f09898" stroke="#c06060" stroke-width="0.8"/><path d="M0 15.5H16" stroke="#606060" stroke-width="1.4"/></svg>
<svg style="position:absolute;left:940px;top:191px;overflow:visible" width="16" height="16" viewBox="0 0 16 16" ><path d="M0 1H16" stroke="#8a8a8a" stroke-width="1"/><circle cx="7" cy="9" r="6" fill="#e8f0f8" stroke="#607080" stroke-width="1.3"/><path d="M12 12L15 15M15 12L12 15" stroke="#e02020" stroke-width="1.6"/></svg>
<svg style="position:absolute;left:940px;top:211px;overflow:visible" width="16" height="16" viewBox="0 0 16 16" ><rect x="1" y="9" width="6.5" height="6.5" fill="#fff" stroke="#444" stroke-width="1"/><rect x="8.5" y="0.5" width="7" height="7" fill="#fff" stroke="#222" stroke-width="1.2"/><path d="M7.5 9L9 7.5" stroke="#2020d0" stroke-width="1.3"/><circle cx="8.2" cy="8.2" r="1.2" fill="#2020d0"/></svg>
<svg style="position:absolute;left:940px;top:231px;overflow:visible" width="16" height="16" viewBox="0 0 16 16" ><path d="M8 0.5V15.5" stroke="#777" stroke-width="0.8"/><path d="M8 1Q10 2 11 8L15 15H8" fill="#fff" stroke="#444" stroke-width="1.1"/><path d="M8 1Q6 2 5 8L1 15H8" fill="none" stroke="#aaa" stroke-width="0.8" stroke-dasharray="1 1"/></svg>
<svg style="position:absolute;left:940px;top:251px;overflow:visible" width="16" height="16" viewBox="0 0 16 16" ><rect x="1" y="8.5" width="7" height="7" fill="none" stroke="#555" stroke-width="0.9" stroke-dasharray="1.2 1"/><rect x="8.5" y="0.5" width="7" height="7" fill="#fff" stroke="#222" stroke-width="1.1"/><path d="M6 10L9 7" stroke="#2020d0" stroke-width="1.2"/><circle cx="8.5" cy="7.5" r="1.2" fill="#2020d0"/></svg>
<svg style="position:absolute;left:940px;top:272px;overflow:visible" width="16" height="16" viewBox="0 0 16 16" ><path d="M1 1.5H15V8L6 16" fill="none" stroke="#333" stroke-width="1.1"/><path d="M2 4H12V9L4 16" fill="none" stroke="#999" stroke-width="0.9" stroke-dasharray="1.5 0.8"/></svg>
<svg style="position:absolute;left:940px;top:290px;overflow:visible" width="16" height="16" viewBox="0 0 16 16" ><rect x="1" y="1" width="4" height="4" fill="#fff" stroke="#333" stroke-width="1.1"/><rect x="1" y="6" width="4" height="4" fill="#fff" stroke="#333" stroke-width="1.1"/><rect x="1" y="11" width="4" height="4" fill="#fff" stroke="#333" stroke-width="1.1"/><rect x="6" y="1" width="4" height="4" fill="#fff" stroke="#333" stroke-width="1.1"/><rect x="6" y="6" width="4" height="4" fill="#fff" stroke="#333" stroke-width="1.1"/><rect x="6" y="11" width="4" height="4" fill="#fff" stroke="#333" stroke-width="1.1"/><rect x="11" y="1" width="4" height="4" fill="#fff" stroke="#333" stroke-width="1.1"/><rect x="11" y="6" width="4" height="4" fill="#fff" stroke="#333" stroke-width="1.1"/><rect x="11" y="11" width="4" height="4" fill="#fff" stroke="#333" stroke-width="1.1"/></svg>
<svg style="position:absolute;left:940px;top:310px;overflow:visible" width="16" height="16" viewBox="0 0 16 16" ><rect x="1" y="6" width="7" height="8" fill="none" stroke="#888" stroke-width="0.9" stroke-dasharray="1.2 0.8"/><path d="M11 5L15.5 9.5L11 14L6.5 9.5Z" fill="#fff" stroke="#222" stroke-width="1.1"/><path d="M6 3Q9 0 12 3" fill="none" stroke="#2020d0" stroke-width="1.2"/><circle cx="12" cy="3.5" r="1" fill="#2020d0"/></svg>
<svg style="position:absolute;left:940px;top:330px;overflow:visible" width="16" height="16" viewBox="0 0 16 16" ><rect x="1" y="1" width="14.5" height="14.5" fill="#fafafa" stroke="#555" stroke-width="1.3"/><path d="M1 9H8V15.5M8 9" fill="none" stroke="#777" stroke-width="1"/><path d="M8 9L13.5 3" stroke="#2020d0" stroke-width="1.3"/><path d="M14.5 2L11 3L13.5 5.5Z" fill="#2020d0"/></svg>
<svg style="position:absolute;left:940px;top:350px;overflow:visible" width="16" height="16" viewBox="0 0 16 16" ><path d="M1 1H7V9H15V15H1Z" fill="#d0d0d0" stroke="#777" stroke-width="1"/><path d="M15.5 9.5V15.5" stroke="#222" stroke-width="1.5"/><path d="M8 12.2H13" stroke="#2020d0" stroke-width="1.3"/><path d="M14 12.2L11 10.2V14.2Z" fill="#2020d0"/></svg>
<svg style="position:absolute;left:940px;top:370px;overflow:visible" width="16" height="16" viewBox="0 0 16 16" ><rect x="1" y="9" width="6" height="6" fill="#fff" stroke="#888" stroke-width="0.9"/><path d="M11.5 8L15.5 12L11.5 16L7.5 12Z" fill="#fff" stroke="#333" stroke-width="1.1"/><rect x="9" y="0.5" width="6.5" height="5" fill="#ddd" stroke="#555" stroke-width="0.9"/><path d="M4 8L8 5M12 6L15 9" stroke="#2020d0" stroke-width="1.2"/></svg>
<svg style="position:absolute;left:940px;top:390px;overflow:visible" width="16" height="16" viewBox="0 0 16 16" ><path d="M0.5 1.5H7" stroke="#222" stroke-width="1.6"/><path d="M7 1.5Q14 2 14.5 9" fill="none" stroke="#4a8ad0" stroke-width="1.6"/><path d="M14.5 10V15.5" stroke="#222" stroke-width="1.6"/></svg>
<svg style="position:absolute;left:940px;top:410px;overflow:visible" width="16" height="16" viewBox="0 0 16 16" ><path d="M0.5 1.5H6" stroke="#222" stroke-width="1.6"/><path d="M6 1.5Q13 2 14.5 8" fill="none" stroke="#4a8ad0" stroke-width="1.6"/><path d="M14.5 9V15.5" stroke="#222" stroke-width="1.6"/><path d="M5 9H9" stroke="#111" stroke-width="1.2"/></svg>
<svg style="position:absolute;left:940px;top:431px;overflow:visible" width="16" height="16" viewBox="0 0 16 16" ><path d="M14.5 14.5H5Q1 14.5 1 9V6Q1 1.5 5 1.5H14.5" fill="none" stroke="#555" stroke-width="1.4"/><path d="M14.5 9V14.5" stroke="#555" stroke-width="1.4"/><circle cx="14.5" cy="4" r="1.2" fill="#4a8ad0"/></svg>
<svg style="position:absolute;left:940px;top:451px;overflow:visible" width="16" height="16" viewBox="0 0 16 16" ><path d="M14.5 14.5H5Q1 14.5 1 9V6Q1 1.5 5 1.5H14.5" fill="none" stroke="#555" stroke-width="1.4"/><circle cx="14.5" cy="4.5" r="1.2" fill="#4a8ad0"/><circle cx="14.5" cy="9.5" r="1.2" fill="#4a8ad0"/></svg>
<svg style="position:absolute;left:940px;top:474px;overflow:visible" width="16" height="16" viewBox="0 0 16 16" ><path d="M0 4H7M9 4H16" stroke="#2a70c8" stroke-width="1.6"/><path d="M8 4L4.5 1.5V6.5Z M8 4L11.5 1.5V6.5Z" fill="#2a70c8"/></svg>
<svg style="position:absolute;left:940px;top:489px;overflow:visible" width="16" height="16" viewBox="0 0 16 16" ><path d="M0.5 1.5H15.5" stroke="#333" stroke-width="1.8"/><path d="M8 2V6" stroke="#aac4e0" stroke-width="1.6"/><path d="M8 6V15.5" stroke="#333" stroke-width="1.6"/></svg>
<svg style="position:absolute;left:940px;top:511px;overflow:visible" width="16" height="16" viewBox="0 0 16 16" ><path d="M2 2L12 14M12 2L4 13" stroke="#3a70b8" stroke-width="1.5"/><circle cx="12.5" cy="4.5" r="2.3" fill="none" stroke="#907040" stroke-width="1.4"/><circle cx="12.5" cy="12" r="2.3" fill="none" stroke="#907040" stroke-width="1.4"/></svg>
<svg style="position:absolute;left:940px;top:531px;overflow:visible" width="16" height="16" viewBox="0 0 16 16" ><path d="M2 10Q5 10 6 6Q8 1 14 2" fill="none" stroke="#7aa0d8" stroke-width="1.2"/><path d="M3 13Q8 13 8 8" fill="none" stroke="#7aa0d8" stroke-width="1.2"/><path d="M8 3H15.5M8 8.5H14" stroke="#111" stroke-width="1.8"/><path d="M8 2V15.5" stroke="#111" stroke-width="1.8"/></svg>
<svg style="position:absolute;left:940px;top:551px;overflow:visible" width="16" height="16" viewBox="0 0 16 16" ><path d="M0 8H16" stroke="#555" stroke-width="1" stroke-dasharray="1.5 1"/><path d="M8 0V10" stroke="#555" stroke-width="1"/><path d="M8 10V16" stroke="#2a60c8" stroke-width="1.4" stroke-dasharray="1.5 1"/><circle cx="8" cy="8" r="1.8" fill="#111"/><path d="M10 8H16" stroke="#2a60c8" stroke-width="1.4" stroke-dasharray="1.5 1"/></svg>
<svg style="position:absolute;left:940px;top:571px;overflow:visible" width="16" height="16" viewBox="0 0 16 16" ><rect x="0.5" y="7" width="15" height="9" fill="#a8a8a8"/><path d="M0.5 7V16M4 7V16M8 7V16M12 7V16" stroke="#888" stroke-width="0.7"/><path d="M1 8Q5 2 10 1.5L16 1V6Q11 9 6 9Z" fill="#d8a868" stroke="#a07030" stroke-width="0.7"/></svg>
<svg style="position:absolute;left:940px;top:590px;overflow:visible" width="16" height="16" viewBox="0 0 16 16" ><rect x="1" y="2" width="10" height="14" fill="#f8e88a" stroke="#d0b040" stroke-width="0.7"/><rect x="11" y="9" width="5" height="7" fill="#fff" stroke="#999" stroke-width="0.7"/></svg>
<div style="position:absolute;left:23px;top:555px;width:914px;height:12px;background:#f0eff1"></div>
<svg style="position:absolute;left:96px;top:555px;overflow:visible" width="44" height="10" viewBox="0 0 44 10" ><path d="M0.5 0Q2 7 4 9H36Q38 8 42 0" fill="#c8c8c8" stroke="#555" stroke-width="0.8"/></svg><div style="position:absolute;left:104.1px;top:557.3px;font-size:7.6px;line-height:1;color:#2a2a2a;white-space:nowrap;letter-spacing:-0.2px">Sheet2</div>
<svg style="position:absolute;left:57px;top:555px;overflow:visible" width="44" height="10" viewBox="0 0 44 10" ><path d="M0.5 0Q2 7 4 9H36Q38 8 42 0" fill="#c8c8c8" stroke="#555" stroke-width="0.8"/></svg><div style="position:absolute;left:65.1px;top:557.3px;font-size:7.6px;line-height:1;color:#2a2a2a;white-space:nowrap;letter-spacing:-0.2px">Sheet1</div>
<svg style="position:absolute;left:23px;top:555px;overflow:visible" width="40" height="10" viewBox="0 0 40 10" ><path d="M0.5 0Q2 7 4 9H32Q34 8 38 0" fill="#fff" stroke="#555" stroke-width="0.8"/></svg><div style="position:absolute;left:31.25px;top:557.3px;font-size:7.6px;line-height:1;color:#2a2a2a;white-space:nowrap;letter-spacing:-0.2px">Model</div>
<div style="position:absolute;left:633px;top:555px;width:294px;height:12px;background:#f2f2f4;border-left:1px solid #e0e0e0;box-sizing:border-box"></div>
<svg style="position:absolute;left:635px;top:558px;overflow:visible" width="4" height="6" viewBox="0 0 4 6" ><path d="M4 0V6L0 3Z" fill="#444"/></svg>
<div style="position:absolute;left:876px;top:556px;width:8px;height:9px;background:linear-gradient(90deg,#e4e4e4,#d0d0d0);border:1px solid #d4d4d4;box-sizing:border-box"></div>
<svg style="position:absolute;left:920px;top:558px;overflow:visible" width="4" height="6" viewBox="0 0 4 6" ><path d="M0 0V6L4 3Z" fill="#555"/></svg>
<div style="position:absolute;left:23px;top:567px;width:914px;height:1px;background:#6a6a6a"></div>
<div style="position:absolute;left:23px;top:568px;width:914px;height:1px;background:#fafafa"></div>
<div style="position:absolute;left:23px;top:569px;width:914px;height:1px;background:#c4c4c4"></div>
<div style="position:absolute;left:23px;top:570px;width:914px;height:10px;background:#f0eff1"></div>
<div style="position:absolute;left:23px;top:569px;width:1px;height:31px;background:#989898"></div>
<div style="position:absolute;left:26px;top:571.8px;font-size:7.2px;line-height:1;color:#2a2a2a;white-space:nowrap;letter-spacing:-0.18px">Command window</div>
<svg style="position:absolute;left:918px;top:572px;overflow:visible" width="7" height="6" viewBox="0 0 7 6" ><rect x="2" y="0.5" width="4.5" height="3.3" fill="none" stroke="#222" stroke-width="0.9"/><rect x="0.5" y="2.2" width="4.5" height="3.3" fill="#f0eff1" stroke="#222" stroke-width="0.9"/></svg>
<svg style="position:absolute;left:928.5px;top:572.8px;overflow:visible" width="6" height="6" viewBox="0 0 6 6" ><path d="M0.5 0.5L5.5 5.5M5.5 0.5L0.5 5.5" stroke="#1a1a1a" stroke-width="1.3"/></svg>
<div style="position:absolute;left:24px;top:580px;width:913px;height:3px;background:linear-gradient(#c8c8c8,#d8d8d8)"></div>
<div style="position:absolute;left:24px;top:583px;width:913px;height:17px;background:#fff"></div>
<div style="position:absolute;left:936px;top:569px;width:1px;height:31px;background:#909090"></div>
<div style="position:absolute;left:925px;top:583px;width:11px;height:17px;background:#f4f4f4"></div>
<svg style="position:absolute;left:927px;top:586.5px;overflow:visible" width="6" height="3.5" viewBox="0 0 6 3.5" ><path d="M0 3.5H6L3 0Z" fill="#111"/></svg>
<div style="position:absolute;left:925px;top:594px;width:10px;height:1px;background:#666"></div>
<div style="position:absolute;left:925px;top:597px;width:10px;height:1px;background:#666"></div>
<div style="position:absolute;left:26px;top:585.5px;font-size:9.2px;line-height:1;color:#333;white-space:nowrap;letter-spacing:-0.1px">Options: <span style="color:#3c8cc4;font-style:italic;letter-spacing:-0.2px">Enter to use from point as displacement</span> or</div>
<div style="position:absolute;left:26px;top:596px;font-size:9.2px;line-height:1;color:#222;white-space:nowrap;">Specify destination</div>
<div style="position:absolute;left:34px;top:583px;width:1px;height:1px;background:#333"></div>
<div style="position:absolute;left:55px;top:583px;width:1px;height:1px;background:#333"></div>
<div style="position:absolute;left:84px;top:583px;width:1px;height:1px;background:#333"></div>
</div></body></html>
